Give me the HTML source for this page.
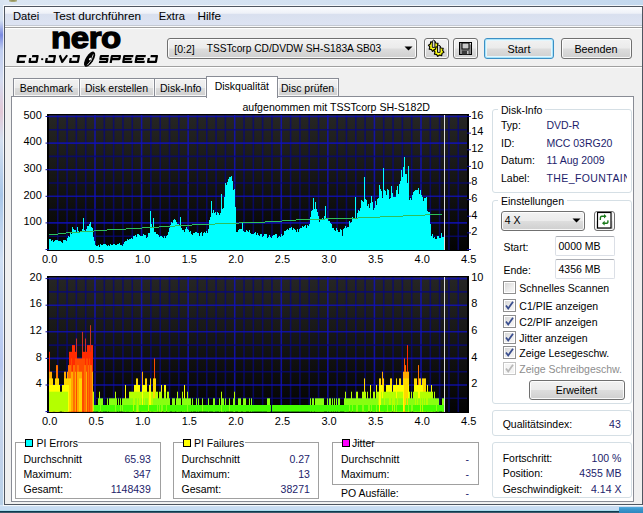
<!DOCTYPE html><html><head><meta charset="utf-8"><style>
html,body{margin:0;padding:0;}
body{width:643px;height:513px;overflow:hidden;position:relative;font-family:"Liberation Sans", sans-serif;background:#c9d8ea;}
.a{position:absolute;}
.t{position:absolute;white-space:pre;font-family:"Liberation Sans", sans-serif;}

</style></head><body>
<div class="a" style="left:0px;top:0px;width:643px;height:6px;background:linear-gradient(90deg,#dbe6f3 0%,#d3e1f1 50%,#c3d8ee 100%);"></div>
<div class="a" style="left:0px;top:0px;width:4px;height:513px;background:linear-gradient(180deg,#d8e4f2 0px,#d4e0f2 20px,#7a8ae0 35px,#c0cef0 50px,#d4dcf0 80px,#e2c8d6 112px,#d4e0f0 140px,#a8c6e8 195px,#d0e0f4 260px,#b4c6f0 365px,#c8d8f0 400px,#c2d2ea 450px,#b8d0e8 505px);"></div>
<div class="a" style="left:0px;top:505px;width:643px;height:8px;background:linear-gradient(180deg,#dce8f6 0px,#c8dcf2 2px,#c8dcf2 5px,#a8dcee 5px,#a8dcee 6px,#0c3c50 6px,#0c3c50 7px,#3c5c6c 7px,#3c5c6c 8px);"></div>
<div class="a" style="left:619px;top:507px;width:24px;height:6px;background:linear-gradient(180deg,#56aadb 0px,#3b98cf 2px,#2d86bd 6px);"></div>
<div class="a" style="left:9px;top:0px;width:8px;height:2px;background:radial-gradient(ellipse at 50% 0%,#8a8a50 0%,#a8a878 60%,rgba(200,210,200,0) 100%);"></div>
<div class="a" style="left:3px;top:5px;width:641px;height:501px;box-sizing:border-box;border:1px solid rgba(255,255,255,0.75);border-right:none;"></div>
<div class="a" style="left:4px;top:6px;width:639px;height:499px;box-sizing:border-box;border:1px solid #4f5661;background:#f0f0f0;"></div>
<div class="a" style="left:5px;top:7px;width:637px;height:18px;background:linear-gradient(180deg,#fbfcfe 0%,#eef1f8 35%,#d9e0ef 40%,#dde3f2 100%);"></div>
<div class="a" style="left:5px;top:25px;width:637px;height:1px;background:#c4c9d3;"></div>
<div class="a" style="left:5px;top:26px;width:637px;height:1px;background:#fafafa;"></div>
<div class="a" style="left:5px;top:27px;width:637px;height:1px;background:#a0a0a0;"></div>
<div class="a" style="left:5px;top:28px;width:637px;height:1px;background:#ffffff;"></div>
<div class="t" style="left:13px;top:11.12px;font-size:11.2px;line-height:11.2px;color:#000;">Datei</div>
<div class="t" style="left:53.3px;top:10.61px;font-size:11.8px;line-height:11.8px;color:#000;">Test durchführen</div>
<div class="t" style="left:158.8px;top:11.12px;font-size:11.2px;line-height:11.2px;color:#000;">Extra</div>
<div class="t" style="left:197.4px;top:10.61px;font-size:11.8px;line-height:11.8px;color:#000;">Hilfe</div>
<div class="a" style="left:5px;top:66px;width:637px;height:1px;background:#a0a0a0;"></div>
<div class="a" style="left:5px;top:67px;width:637px;height:1px;background:#ffffff;"></div>
<div class="t" style="left:51px;top:20.7px;font-size:30px;line-height:34px;font-weight:bold;color:#000;-webkit-text-stroke:1.3px #000;letter-spacing:-0.4px;transform:scaleX(1.1);transform-origin:0 0;">nero</div><svg class="a" style="left:0;top:0" width="170" height="70"><g fill="none" stroke="#000" stroke-width="2.2" stroke-linejoin="round"><g transform="translate(17.70,55) skewX(-10)"><polyline points="8.80,1.10 1.10,1.10 1.10,6.90 8.40,6.90"/></g><g transform="translate(29.70,55) skewX(-10)"><polyline points="2.60,1.10 8.10,1.10 8.10,6.90 1.10,6.90 1.10,2.90"/></g><g transform="translate(46.20,55) skewX(-10)"><polyline points="2.60,1.10 8.90,1.10 8.90,6.90 1.10,6.90 1.10,2.90"/></g><g transform="translate(58.70,55) skewX(-10)"><polyline points="1.10,0.20 4.80,6.90 8.50,0.20"/></g><g transform="translate(70.20,55) skewX(-10)"><polyline points="2.60,1.10 8.90,1.10 8.90,6.90 1.10,6.90 1.10,2.90"/></g><g transform="translate(100.00,55) skewX(-10)"><polyline points="9.00,1.10 1.10,1.10 1.10,4.00 8.10,4.00 8.10,6.90 0.20,6.90"/></g><g transform="translate(111.00,55) skewX(-10)"><polyline points="1.10,8.00 1.10,1.10 9.10,1.10 9.10,4.10 1.60,4.10"/></g><g transform="translate(123.40,55) skewX(-10)"><polyline points="10.10,1.10 1.10,1.10 1.10,6.90 10.10,6.90"/><polyline points="1.10,4.00 8.80,4.00"/></g><g transform="translate(135.80,55) skewX(-10)"><polyline points="10.10,1.10 1.10,1.10 1.10,6.90 10.10,6.90"/><polyline points="1.10,4.00 8.80,4.00"/></g><g transform="translate(148.20,55) skewX(-10)"><polyline points="2.60,1.10 8.90,1.10 8.90,6.90 1.10,6.90 1.10,2.90"/></g></g><rect x="41.2" y="58.3" width="2" height="1.8" fill="#000"/><g transform="translate(89.6,59.2) rotate(-58)"><ellipse cx="0" cy="0" rx="8.6" ry="3.9" fill="#000"/><ellipse cx="0.4" cy="0.2" rx="1.4" ry="0.9" fill="#fff"/><path d="M-6.4 1.2 Q-1 3.0 6.0 0.6" stroke="#fff" stroke-width="0.7" fill="none"/></g></svg>
<div class="a" style="left:167px;top:38px;width:250px;height:21px;box-sizing:border-box;border:1px solid #707070;border-radius:3px;background:linear-gradient(#f2f2f2 0%,#ebebeb 48%,#dddddd 52%,#cfcfcf 100%);box-shadow: inset 0 0 0 1px rgba(255,255,255,0.85);"></div>
<div class="t" style="left:174.3px;top:44.11px;font-size:10.5px;line-height:10.5px;color:#000;">[0:2]</div>
<div class="t" style="left:206.7px;top:44.37px;font-size:10.2px;line-height:10.2px;color:#000;">TSSTcorp CD/DVDW SH-S183A SB03</div>
<svg class="a" style="left:404px;top:46px" width="10" height="6"><path d="M0.5 0.5 L8.5 0.5 L4.5 4.5 Z" fill="#000"/></svg>
<div class="a" style="left:424px;top:38px;width:25px;height:21px;box-sizing:border-box;border:1px solid #707070;border-radius:3px;background:linear-gradient(#f2f2f2 0%,#ebebeb 48%,#dddddd 52%,#cfcfcf 100%);box-shadow: inset 0 0 0 1px rgba(255,255,255,0.85);"></div>
<div class="a" style="left:453px;top:38px;width:25px;height:21px;box-sizing:border-box;border:1px solid #707070;border-radius:3px;background:linear-gradient(#f2f2f2 0%,#ebebeb 48%,#dddddd 52%,#cfcfcf 100%);box-shadow: inset 0 0 0 1px rgba(255,255,255,0.85);"></div>
<svg class="a" style="left:424px;top:38px" width="25" height="21"><polygon points="14.79,9.25 12.83,10.38 12.53,12.62 10.35,12.03 8.55,13.39 7.42,11.43 5.18,11.13 5.77,8.95 4.41,7.15 6.37,6.02 6.67,3.78 8.85,4.37 10.65,3.01 11.78,4.97 14.02,5.27 13.43,7.45" fill="#f4f400" stroke="#000" stroke-width="1.1" stroke-linejoin="round"/><circle cx="9.6" cy="8.2" r="2.6" fill="#ffff40"/><path d="M8.299999999999999 9.399999999999999 V2.999999999999999 Q9.6 1.1999999999999993 10.9 2.999999999999999 V9.399999999999999 Z" fill="#d8d8d8" stroke="#000" stroke-width="0.9"/><polygon points="19.99,14.25 18.03,15.38 17.73,17.62 15.55,17.03 13.75,18.39 12.62,16.43 10.38,16.13 10.97,13.95 9.61,12.15 11.57,11.02 11.87,8.78 14.05,9.37 15.85,8.01 16.98,9.97 19.22,10.27 18.63,12.45" fill="#f4f400" stroke="#000" stroke-width="1.1" stroke-linejoin="round"/><circle cx="14.8" cy="13.2" r="2.6" fill="#ffff40"/><path d="M13.5 14.399999999999999 V7.999999999999999 Q14.8 6.199999999999999 16.1 7.999999999999999 V14.399999999999999 Z" fill="#d8d8d8" stroke="#000" stroke-width="0.9"/></svg><svg class="a" style="left:459px;top:42px" width="13" height="13"><rect x="0.5" y="0.5" width="12" height="12" fill="#8a8a8a" stroke="#000"/><rect x="3" y="1" width="7" height="6" fill="#c8c8c8" stroke="#000" stroke-width="1"/><rect x="3" y="8.5" width="7.5" height="4" fill="#3a3a3a"/><rect x="8" y="9" width="1.6" height="3" fill="#c0c0c0"/><rect x="10.8" y="1.2" width="1.2" height="1.2" fill="#fff"/></svg>
<div class="a" style="left:484px;top:38px;width:70px;height:21px;box-sizing:border-box;border:1px solid #3c8fc4;border-radius:3px;background:linear-gradient(#f2f2f2 0%,#ebebeb 48%,#dddddd 52%,#cfcfcf 100%);box-shadow: inset 0 0 0 1px #a9e4fa, inset 0 0 0 2px #e4f6fd;"></div>
<div class="t" style="left:319px;width:400px;text-align:center;top:43.86px;font-size:10.8px;line-height:10.8px;color:#000;">Start</div>
<div class="a" style="left:561px;top:38px;width:71px;height:21px;box-sizing:border-box;border:1px solid #707070;border-radius:3px;background:linear-gradient(#f2f2f2 0%,#ebebeb 48%,#dddddd 52%,#cfcfcf 100%);box-shadow: inset 0 0 0 1px rgba(255,255,255,0.85);"></div>
<div class="t" style="left:396px;width:400px;text-align:center;top:43.86px;font-size:10.8px;line-height:10.8px;color:#000;">Beenden</div>
<div class="a" style="left:13px;top:78px;width:67px;height:19px;box-sizing:border-box;border:1px solid #898c95;background:linear-gradient(#f2f2f2 0%,#ebebeb 50%,#dddddd 51%,#cfcfcf 100%);box-shadow: inset 0 0 0 1px rgba(255,255,255,0.8);"></div>
<div class="t" style="left:19.7px;top:82.61px;font-size:10.5px;line-height:10.5px;color:#000;">Benchmark</div>
<div class="a" style="left:79px;top:78px;width:76px;height:19px;box-sizing:border-box;border:1px solid #898c95;background:linear-gradient(#f2f2f2 0%,#ebebeb 50%,#dddddd 51%,#cfcfcf 100%);box-shadow: inset 0 0 0 1px rgba(255,255,255,0.8);"></div>
<div class="t" style="left:85px;top:82.61px;font-size:10.5px;line-height:10.5px;color:#000;">Disk erstellen</div>
<div class="a" style="left:154px;top:78px;width:53px;height:19px;box-sizing:border-box;border:1px solid #898c95;background:linear-gradient(#f2f2f2 0%,#ebebeb 50%,#dddddd 51%,#cfcfcf 100%);box-shadow: inset 0 0 0 1px rgba(255,255,255,0.8);"></div>
<div class="t" style="left:160px;top:82.61px;font-size:10.5px;line-height:10.5px;color:#000;">Disk-Info</div>
<div class="a" style="left:277px;top:78px;width:62px;height:19px;box-sizing:border-box;border:1px solid #898c95;background:linear-gradient(#f2f2f2 0%,#ebebeb 50%,#dddddd 51%,#cfcfcf 100%);box-shadow: inset 0 0 0 1px rgba(255,255,255,0.8);"></div>
<div class="t" style="left:281px;top:82.61px;font-size:10.5px;line-height:10.5px;color:#000;">Disc prüfen</div>
<div class="a" style="left:11px;top:96px;width:623px;height:406px;box-sizing:border-box;border:1px solid #898c95;background:#fff;"></div>
<div class="a" style="left:206px;top:76px;width:72px;height:22px;box-sizing:border-box;border:1px solid #898c95;border-bottom:none;background:#fff;"></div>
<div class="t" style="left:214.7px;top:80.71px;font-size:10.5px;line-height:10.5px;color:#000;">Diskqualität</div>
<div class="t" style="left:242.4px;top:102.43px;font-size:10.6px;line-height:10.6px;color:#000;">aufgenommen mit TSSTcorp SH-S182D</div>
<svg class="a" style="left:0;top:0" width="643" height="513">
<defs><linearGradient id="bg" x1="0" y1="0" x2="0" y2="1"><stop offset="0" stop-color="#262624"/><stop offset="1" stop-color="#030303"/></linearGradient></defs>
<rect x="47" y="114" width="422" height="137" fill="#000"/>
<rect x="49" y="115" width="418" height="135" fill="url(#bg)"/>
<rect x="47" y="276" width="422" height="137" fill="#000"/>
<rect x="49" y="277" width="418" height="135" fill="url(#bg)"/>
<line x1="57.74" y1="115" x2="57.74" y2="250" stroke="#08087a" stroke-opacity="0.75" stroke-width="1.6"/>
<line x1="67.06" y1="115" x2="67.06" y2="250" stroke="#08087a" stroke-opacity="0.75" stroke-width="1.6"/>
<line x1="76.37" y1="115" x2="76.37" y2="250" stroke="#08087a" stroke-opacity="0.75" stroke-width="1.6"/>
<line x1="85.69" y1="115" x2="85.69" y2="250" stroke="#08087a" stroke-opacity="0.75" stroke-width="1.6"/>
<line x1="95.00" y1="115" x2="95.00" y2="250" stroke="#1010c0" stroke-opacity="0.8" stroke-width="1.6"/>
<line x1="104.31" y1="115" x2="104.31" y2="250" stroke="#08087a" stroke-opacity="0.75" stroke-width="1.6"/>
<line x1="113.63" y1="115" x2="113.63" y2="250" stroke="#08087a" stroke-opacity="0.75" stroke-width="1.6"/>
<line x1="122.94" y1="115" x2="122.94" y2="250" stroke="#08087a" stroke-opacity="0.75" stroke-width="1.6"/>
<line x1="132.26" y1="115" x2="132.26" y2="250" stroke="#08087a" stroke-opacity="0.75" stroke-width="1.6"/>
<line x1="141.57" y1="115" x2="141.57" y2="250" stroke="#1010c0" stroke-opacity="0.8" stroke-width="1.6"/>
<line x1="150.88" y1="115" x2="150.88" y2="250" stroke="#08087a" stroke-opacity="0.75" stroke-width="1.6"/>
<line x1="160.20" y1="115" x2="160.20" y2="250" stroke="#08087a" stroke-opacity="0.75" stroke-width="1.6"/>
<line x1="169.51" y1="115" x2="169.51" y2="250" stroke="#08087a" stroke-opacity="0.75" stroke-width="1.6"/>
<line x1="178.83" y1="115" x2="178.83" y2="250" stroke="#08087a" stroke-opacity="0.75" stroke-width="1.6"/>
<line x1="188.14" y1="115" x2="188.14" y2="250" stroke="#1010c0" stroke-opacity="0.8" stroke-width="1.6"/>
<line x1="197.45" y1="115" x2="197.45" y2="250" stroke="#08087a" stroke-opacity="0.75" stroke-width="1.6"/>
<line x1="206.77" y1="115" x2="206.77" y2="250" stroke="#08087a" stroke-opacity="0.75" stroke-width="1.6"/>
<line x1="216.08" y1="115" x2="216.08" y2="250" stroke="#08087a" stroke-opacity="0.75" stroke-width="1.6"/>
<line x1="225.40" y1="115" x2="225.40" y2="250" stroke="#08087a" stroke-opacity="0.75" stroke-width="1.6"/>
<line x1="234.71" y1="115" x2="234.71" y2="250" stroke="#1010c0" stroke-opacity="0.8" stroke-width="1.6"/>
<line x1="244.02" y1="115" x2="244.02" y2="250" stroke="#08087a" stroke-opacity="0.75" stroke-width="1.6"/>
<line x1="253.34" y1="115" x2="253.34" y2="250" stroke="#08087a" stroke-opacity="0.75" stroke-width="1.6"/>
<line x1="262.65" y1="115" x2="262.65" y2="250" stroke="#08087a" stroke-opacity="0.75" stroke-width="1.6"/>
<line x1="271.97" y1="115" x2="271.97" y2="250" stroke="#08087a" stroke-opacity="0.75" stroke-width="1.6"/>
<line x1="281.28" y1="115" x2="281.28" y2="250" stroke="#1010c0" stroke-opacity="0.8" stroke-width="1.6"/>
<line x1="290.59" y1="115" x2="290.59" y2="250" stroke="#08087a" stroke-opacity="0.75" stroke-width="1.6"/>
<line x1="299.91" y1="115" x2="299.91" y2="250" stroke="#08087a" stroke-opacity="0.75" stroke-width="1.6"/>
<line x1="309.22" y1="115" x2="309.22" y2="250" stroke="#08087a" stroke-opacity="0.75" stroke-width="1.6"/>
<line x1="318.54" y1="115" x2="318.54" y2="250" stroke="#08087a" stroke-opacity="0.75" stroke-width="1.6"/>
<line x1="327.85" y1="115" x2="327.85" y2="250" stroke="#1010c0" stroke-opacity="0.8" stroke-width="1.6"/>
<line x1="337.16" y1="115" x2="337.16" y2="250" stroke="#08087a" stroke-opacity="0.75" stroke-width="1.6"/>
<line x1="346.48" y1="115" x2="346.48" y2="250" stroke="#08087a" stroke-opacity="0.75" stroke-width="1.6"/>
<line x1="355.79" y1="115" x2="355.79" y2="250" stroke="#08087a" stroke-opacity="0.75" stroke-width="1.6"/>
<line x1="365.11" y1="115" x2="365.11" y2="250" stroke="#08087a" stroke-opacity="0.75" stroke-width="1.6"/>
<line x1="374.42" y1="115" x2="374.42" y2="250" stroke="#1010c0" stroke-opacity="0.8" stroke-width="1.6"/>
<line x1="383.73" y1="115" x2="383.73" y2="250" stroke="#08087a" stroke-opacity="0.75" stroke-width="1.6"/>
<line x1="393.05" y1="115" x2="393.05" y2="250" stroke="#08087a" stroke-opacity="0.75" stroke-width="1.6"/>
<line x1="402.36" y1="115" x2="402.36" y2="250" stroke="#08087a" stroke-opacity="0.75" stroke-width="1.6"/>
<line x1="411.68" y1="115" x2="411.68" y2="250" stroke="#08087a" stroke-opacity="0.75" stroke-width="1.6"/>
<line x1="420.99" y1="115" x2="420.99" y2="250" stroke="#1010c0" stroke-opacity="0.8" stroke-width="1.6"/>
<line x1="430.30" y1="115" x2="430.30" y2="250" stroke="#08087a" stroke-opacity="0.75" stroke-width="1.6"/>
<line x1="439.62" y1="115" x2="439.62" y2="250" stroke="#08087a" stroke-opacity="0.75" stroke-width="1.6"/>
<line x1="448.93" y1="115" x2="448.93" y2="250" stroke="#08087a" stroke-opacity="0.75" stroke-width="1.6"/>
<line x1="458.25" y1="115" x2="458.25" y2="250" stroke="#08087a" stroke-opacity="0.75" stroke-width="1.6"/>
<line x1="49" y1="236.20" x2="467" y2="236.20" stroke="#08087a" stroke-opacity="0.75" stroke-width="1.6"/>
<line x1="49" y1="209.60" x2="467" y2="209.60" stroke="#08087a" stroke-opacity="0.75" stroke-width="1.6"/>
<line x1="49" y1="183.00" x2="467" y2="183.00" stroke="#08087a" stroke-opacity="0.75" stroke-width="1.6"/>
<line x1="49" y1="156.40" x2="467" y2="156.40" stroke="#08087a" stroke-opacity="0.75" stroke-width="1.6"/>
<line x1="49" y1="129.80" x2="467" y2="129.80" stroke="#08087a" stroke-opacity="0.75" stroke-width="1.6"/>
<line x1="49" y1="222.90" x2="467" y2="222.90" stroke="#1010c0" stroke-opacity="0.8" stroke-width="1.6"/>
<line x1="49" y1="196.30" x2="467" y2="196.30" stroke="#1010c0" stroke-opacity="0.8" stroke-width="1.6"/>
<line x1="49" y1="169.70" x2="467" y2="169.70" stroke="#1010c0" stroke-opacity="0.8" stroke-width="1.6"/>
<line x1="49" y1="143.10" x2="467" y2="143.10" stroke="#1010c0" stroke-opacity="0.8" stroke-width="1.6"/>
<line x1="49" y1="116.50" x2="467" y2="116.50" stroke="#1010c0" stroke-opacity="0.8" stroke-width="1.6"/>
<line x1="57.74" y1="277" x2="57.74" y2="412" stroke="#08087a" stroke-opacity="0.75" stroke-width="1.6"/>
<line x1="67.06" y1="277" x2="67.06" y2="412" stroke="#08087a" stroke-opacity="0.75" stroke-width="1.6"/>
<line x1="76.37" y1="277" x2="76.37" y2="412" stroke="#08087a" stroke-opacity="0.75" stroke-width="1.6"/>
<line x1="85.69" y1="277" x2="85.69" y2="412" stroke="#08087a" stroke-opacity="0.75" stroke-width="1.6"/>
<line x1="95.00" y1="277" x2="95.00" y2="412" stroke="#1010c0" stroke-opacity="0.8" stroke-width="1.6"/>
<line x1="104.31" y1="277" x2="104.31" y2="412" stroke="#08087a" stroke-opacity="0.75" stroke-width="1.6"/>
<line x1="113.63" y1="277" x2="113.63" y2="412" stroke="#08087a" stroke-opacity="0.75" stroke-width="1.6"/>
<line x1="122.94" y1="277" x2="122.94" y2="412" stroke="#08087a" stroke-opacity="0.75" stroke-width="1.6"/>
<line x1="132.26" y1="277" x2="132.26" y2="412" stroke="#08087a" stroke-opacity="0.75" stroke-width="1.6"/>
<line x1="141.57" y1="277" x2="141.57" y2="412" stroke="#1010c0" stroke-opacity="0.8" stroke-width="1.6"/>
<line x1="150.88" y1="277" x2="150.88" y2="412" stroke="#08087a" stroke-opacity="0.75" stroke-width="1.6"/>
<line x1="160.20" y1="277" x2="160.20" y2="412" stroke="#08087a" stroke-opacity="0.75" stroke-width="1.6"/>
<line x1="169.51" y1="277" x2="169.51" y2="412" stroke="#08087a" stroke-opacity="0.75" stroke-width="1.6"/>
<line x1="178.83" y1="277" x2="178.83" y2="412" stroke="#08087a" stroke-opacity="0.75" stroke-width="1.6"/>
<line x1="188.14" y1="277" x2="188.14" y2="412" stroke="#1010c0" stroke-opacity="0.8" stroke-width="1.6"/>
<line x1="197.45" y1="277" x2="197.45" y2="412" stroke="#08087a" stroke-opacity="0.75" stroke-width="1.6"/>
<line x1="206.77" y1="277" x2="206.77" y2="412" stroke="#08087a" stroke-opacity="0.75" stroke-width="1.6"/>
<line x1="216.08" y1="277" x2="216.08" y2="412" stroke="#08087a" stroke-opacity="0.75" stroke-width="1.6"/>
<line x1="225.40" y1="277" x2="225.40" y2="412" stroke="#08087a" stroke-opacity="0.75" stroke-width="1.6"/>
<line x1="234.71" y1="277" x2="234.71" y2="412" stroke="#1010c0" stroke-opacity="0.8" stroke-width="1.6"/>
<line x1="244.02" y1="277" x2="244.02" y2="412" stroke="#08087a" stroke-opacity="0.75" stroke-width="1.6"/>
<line x1="253.34" y1="277" x2="253.34" y2="412" stroke="#08087a" stroke-opacity="0.75" stroke-width="1.6"/>
<line x1="262.65" y1="277" x2="262.65" y2="412" stroke="#08087a" stroke-opacity="0.75" stroke-width="1.6"/>
<line x1="271.97" y1="277" x2="271.97" y2="412" stroke="#08087a" stroke-opacity="0.75" stroke-width="1.6"/>
<line x1="281.28" y1="277" x2="281.28" y2="412" stroke="#1010c0" stroke-opacity="0.8" stroke-width="1.6"/>
<line x1="290.59" y1="277" x2="290.59" y2="412" stroke="#08087a" stroke-opacity="0.75" stroke-width="1.6"/>
<line x1="299.91" y1="277" x2="299.91" y2="412" stroke="#08087a" stroke-opacity="0.75" stroke-width="1.6"/>
<line x1="309.22" y1="277" x2="309.22" y2="412" stroke="#08087a" stroke-opacity="0.75" stroke-width="1.6"/>
<line x1="318.54" y1="277" x2="318.54" y2="412" stroke="#08087a" stroke-opacity="0.75" stroke-width="1.6"/>
<line x1="327.85" y1="277" x2="327.85" y2="412" stroke="#1010c0" stroke-opacity="0.8" stroke-width="1.6"/>
<line x1="337.16" y1="277" x2="337.16" y2="412" stroke="#08087a" stroke-opacity="0.75" stroke-width="1.6"/>
<line x1="346.48" y1="277" x2="346.48" y2="412" stroke="#08087a" stroke-opacity="0.75" stroke-width="1.6"/>
<line x1="355.79" y1="277" x2="355.79" y2="412" stroke="#08087a" stroke-opacity="0.75" stroke-width="1.6"/>
<line x1="365.11" y1="277" x2="365.11" y2="412" stroke="#08087a" stroke-opacity="0.75" stroke-width="1.6"/>
<line x1="374.42" y1="277" x2="374.42" y2="412" stroke="#1010c0" stroke-opacity="0.8" stroke-width="1.6"/>
<line x1="383.73" y1="277" x2="383.73" y2="412" stroke="#08087a" stroke-opacity="0.75" stroke-width="1.6"/>
<line x1="393.05" y1="277" x2="393.05" y2="412" stroke="#08087a" stroke-opacity="0.75" stroke-width="1.6"/>
<line x1="402.36" y1="277" x2="402.36" y2="412" stroke="#08087a" stroke-opacity="0.75" stroke-width="1.6"/>
<line x1="411.68" y1="277" x2="411.68" y2="412" stroke="#08087a" stroke-opacity="0.75" stroke-width="1.6"/>
<line x1="420.99" y1="277" x2="420.99" y2="412" stroke="#1010c0" stroke-opacity="0.8" stroke-width="1.6"/>
<line x1="430.30" y1="277" x2="430.30" y2="412" stroke="#08087a" stroke-opacity="0.75" stroke-width="1.6"/>
<line x1="439.62" y1="277" x2="439.62" y2="412" stroke="#08087a" stroke-opacity="0.75" stroke-width="1.6"/>
<line x1="448.93" y1="277" x2="448.93" y2="412" stroke="#08087a" stroke-opacity="0.75" stroke-width="1.6"/>
<line x1="458.25" y1="277" x2="458.25" y2="412" stroke="#08087a" stroke-opacity="0.75" stroke-width="1.6"/>
<line x1="49" y1="398.30" x2="467" y2="398.30" stroke="#08087a" stroke-opacity="0.75" stroke-width="1.6"/>
<line x1="49" y1="371.70" x2="467" y2="371.70" stroke="#08087a" stroke-opacity="0.75" stroke-width="1.6"/>
<line x1="49" y1="345.10" x2="467" y2="345.10" stroke="#08087a" stroke-opacity="0.75" stroke-width="1.6"/>
<line x1="49" y1="318.50" x2="467" y2="318.50" stroke="#08087a" stroke-opacity="0.75" stroke-width="1.6"/>
<line x1="49" y1="291.90" x2="467" y2="291.90" stroke="#08087a" stroke-opacity="0.75" stroke-width="1.6"/>
<line x1="49" y1="385.00" x2="467" y2="385.00" stroke="#1010c0" stroke-opacity="0.8" stroke-width="1.6"/>
<line x1="49" y1="358.40" x2="467" y2="358.40" stroke="#1010c0" stroke-opacity="0.8" stroke-width="1.6"/>
<line x1="49" y1="331.80" x2="467" y2="331.80" stroke="#1010c0" stroke-opacity="0.8" stroke-width="1.6"/>
<line x1="49" y1="305.20" x2="467" y2="305.20" stroke="#1010c0" stroke-opacity="0.8" stroke-width="1.6"/>
<line x1="49" y1="278.60" x2="467" y2="278.60" stroke="#1010c0" stroke-opacity="0.8" stroke-width="1.6"/>
<path d="M49 238.5V249.5H50V238.5ZM50 238.8V249.5H51V238.8ZM51 240.9V249.5H52V240.9ZM52 240.0V249.5H53V240.0ZM53 241.7V249.5H54V241.7ZM54 241.0V249.5H55V241.0ZM55 239.7V249.5H56V239.7ZM56 240.4V249.5H57V240.4ZM57 239.9V249.5H58V239.9ZM58 241.3V249.5H59V241.3ZM59 241.0V249.5H60V241.0ZM60 241.4V249.5H61V241.4ZM61 242.2V249.5H62V242.2ZM62 242.9V249.5H63V242.9ZM63 240.2V249.5H64V240.2ZM64 239.7V249.5H65V239.7ZM65 240.2V249.5H66V240.2ZM66 240.7V249.5H67V240.7ZM67 237.9V249.5H68V237.9ZM68 235.9V249.5H69V235.9ZM69 237.4V249.5H70V237.4ZM70 232.4V249.5H71V232.4ZM71 234.0V249.5H72V234.0ZM72 229.3V249.5H73V229.3ZM73 229.2V249.5H74V229.2ZM74 229.8V249.5H75V229.8ZM75 230.3V249.5H76V230.3ZM76 231.8V249.5H77V231.8ZM77 227.7V249.5H78V227.7ZM78 230.8V249.5H79V230.8ZM79 232.3V249.5H80V232.3ZM80 231.4V249.5H81V231.4ZM81 231.5V249.5H82V231.5ZM82 229.0V249.5H83V229.0ZM83 228.6V249.5H84V228.6ZM84 229.6V249.5H85V229.6ZM85 232.3V249.5H86V232.3ZM86 229.2V249.5H87V229.2ZM87 226.0V249.5H88V226.0ZM88 225.5V249.5H89V225.5ZM89 224.0V249.5H90V224.0ZM90 222.6V249.5H91V222.6ZM91 227.1V249.5H92V227.1ZM92 228.2V249.5H93V228.2ZM93 236.9V249.5H94V236.9ZM94 241.4V249.5H95V241.4ZM95 244.7V249.5H96V244.7ZM96 246.4V249.5H97V246.4ZM97 246.2V249.5H98V246.2ZM98 245.2V249.5H99V245.2ZM99 246.7V249.5H100V246.7ZM100 244.3V249.5H101V244.3ZM101 244.5V249.5H102V244.5ZM102 245.1V249.5H103V245.1ZM103 243.6V249.5H104V243.6ZM104 244.4V249.5H105V244.4ZM105 243.7V249.5H106V243.7ZM106 245.1V249.5H107V245.1ZM107 245.5V249.5H108V245.5ZM108 245.1V249.5H109V245.1ZM109 246.1V249.5H110V246.1ZM110 244.3V249.5H111V244.3ZM111 245.1V249.5H112V245.1ZM112 244.5V249.5H113V244.5ZM113 244.2V249.5H114V244.2ZM114 243.6V249.5H115V243.6ZM115 244.6V249.5H116V244.6ZM116 244.9V249.5H117V244.9ZM117 243.5V249.5H118V243.5ZM118 244.2V249.5H119V244.2ZM119 243.0V249.5H120V243.0ZM120 244.6V249.5H121V244.6ZM121 244.5V249.5H122V244.5ZM122 245.8V249.5H123V245.8ZM123 244.3V249.5H124V244.3ZM124 241.6V249.5H125V241.6ZM125 240.8V249.5H126V240.8ZM126 241.4V249.5H127V241.4ZM127 239.4V249.5H128V239.4ZM128 240.1V249.5H129V240.1ZM129 239.0V249.5H130V239.0ZM130 238.6V249.5H131V238.6ZM131 237.9V249.5H132V237.9ZM132 239.3V249.5H133V239.3ZM133 236.3V249.5H134V236.3ZM134 235.7V249.5H135V235.7ZM135 235.3V249.5H136V235.3ZM136 236.7V249.5H137V236.7ZM137 233.5V249.5H138V233.5ZM138 234.4V249.5H139V234.4ZM139 234.7V249.5H140V234.7ZM140 236.2V249.5H141V236.2ZM141 235.7V249.5H142V235.7ZM142 236.0V249.5H143V236.0ZM143 233.8V249.5H144V233.8ZM144 234.7V249.5H145V234.7ZM145 234.9V249.5H146V234.9ZM146 237.6V249.5H147V237.6ZM147 237.4V249.5H148V237.4ZM148 233.4V249.5H149V233.4ZM149 232.7V249.5H150V232.7ZM150 228.6V249.5H151V228.6ZM151 224.2V249.5H152V224.2ZM152 227.1V249.5H153V227.1ZM153 232.0V249.5H154V232.0ZM154 231.8V249.5H155V231.8ZM155 232.4V249.5H156V232.4ZM156 233.9V249.5H157V233.9ZM157 234.0V249.5H158V234.0ZM158 235.0V249.5H159V235.0ZM159 237.2V249.5H160V237.2ZM160 236.4V249.5H161V236.4ZM161 236.3V249.5H162V236.3ZM162 237.3V249.5H163V237.3ZM163 238.1V249.5H164V238.1ZM164 235.7V249.5H165V235.7ZM165 237.6V249.5H166V237.6ZM166 235.8V249.5H167V235.8ZM167 235.2V249.5H168V235.2ZM168 232.4V249.5H169V232.4ZM169 227.6V249.5H170V227.6ZM170 225.0V249.5H171V225.0ZM171 221.5V249.5H172V221.5ZM172 223.4V249.5H173V223.4ZM173 219.9V249.5H174V219.9ZM174 219.1V249.5H175V219.1ZM175 220.2V249.5H176V220.2ZM176 221.7V249.5H177V221.7ZM177 224.0V249.5H178V224.0ZM178 224.3V249.5H179V224.3ZM179 225.4V249.5H180V225.4ZM180 226.9V249.5H181V226.9ZM181 228.0V249.5H182V228.0ZM182 230.0V249.5H183V230.0ZM183 229.5V249.5H184V229.5ZM184 231.9V249.5H185V231.9ZM185 229.0V249.5H186V229.0ZM186 227.2V249.5H187V227.2ZM187 228.7V249.5H188V228.7ZM188 230.3V249.5H189V230.3ZM189 231.6V249.5H190V231.6ZM190 231.2V249.5H191V231.2ZM191 234.4V249.5H192V234.4ZM192 235.4V249.5H193V235.4ZM193 232.8V249.5H194V232.8ZM194 233.0V249.5H195V233.0ZM195 232.0V249.5H196V232.0ZM196 232.2V249.5H197V232.2ZM197 233.2V249.5H198V233.2ZM198 233.2V249.5H199V233.2ZM199 235.5V249.5H200V235.5ZM200 232.6V249.5H201V232.6ZM201 232.1V249.5H202V232.1ZM202 235.7V249.5H203V235.7ZM203 233.3V249.5H204V233.3ZM204 231.7V249.5H205V231.7ZM205 233.0V249.5H206V233.0ZM206 231.1V249.5H207V231.1ZM207 232.5V249.5H208V232.5ZM208 229.3V249.5H209V229.3ZM209 220.1V249.5H210V220.1ZM210 217.3V249.5H211V217.3ZM211 213.7V249.5H212V213.7ZM212 213.4V249.5H213V213.4ZM213 209.8V249.5H214V209.8ZM214 212.8V249.5H215V212.8ZM215 211.6V249.5H216V211.6ZM216 214.8V249.5H217V214.8ZM217 212.2V249.5H218V212.2ZM218 212.6V249.5H219V212.6ZM219 214.6V249.5H220V214.6ZM220 212.8V249.5H221V212.8ZM221 210.4V249.5H222V210.4ZM222 209.3V249.5H223V209.3ZM223 207.8V249.5H224V207.8ZM224 196.6V249.5H225V196.6ZM225 183.2V249.5H226V183.2ZM226 185.2V249.5H227V185.2ZM227 182.4V249.5H228V182.4ZM228 178.6V249.5H229V178.6ZM229 176.9V249.5H230V176.9ZM230 177.0V249.5H231V177.0ZM231 176.0V249.5H232V176.0ZM232 181.0V249.5H233V181.0ZM233 189.7V249.5H234V189.7ZM234 188.9V249.5H235V188.9ZM235 207.4V249.5H236V207.4ZM236 231.9V249.5H237V231.9ZM237 232.3V249.5H238V232.3ZM238 229.6V249.5H239V229.6ZM239 229.4V249.5H240V229.4ZM240 229.2V249.5H241V229.2ZM241 229.0V249.5H242V229.0ZM242 228.8V249.5H243V228.8ZM243 230.5V249.5H244V230.5ZM244 232.0V249.5H245V232.0ZM245 231.9V249.5H246V231.9ZM246 230.1V249.5H247V230.1ZM247 231.2V249.5H248V231.2ZM248 232.4V249.5H249V232.4ZM249 229.8V249.5H250V229.8ZM250 232.5V249.5H251V232.5ZM251 234.4V249.5H252V234.4ZM252 233.9V249.5H253V233.9ZM253 234.0V249.5H254V234.0ZM254 232.9V249.5H255V232.9ZM255 232.1V249.5H256V232.1ZM256 234.8V249.5H257V234.8ZM257 232.9V249.5H258V232.9ZM258 235.1V249.5H259V235.1ZM259 236.3V249.5H260V236.3ZM260 233.6V249.5H261V233.6ZM261 233.8V249.5H262V233.8ZM262 236.7V249.5H263V236.7ZM263 235.7V249.5H264V235.7ZM264 233.8V249.5H265V233.8ZM265 234.0V249.5H266V234.0ZM266 234.3V249.5H267V234.3ZM267 237.5V249.5H268V237.5ZM268 237.2V249.5H269V237.2ZM269 234.5V249.5H270V234.5ZM270 237.0V249.5H271V237.0ZM271 237.7V249.5H272V237.7ZM272 235.9V249.5H273V235.9ZM273 234.6V249.5H274V234.6ZM274 235.2V249.5H275V235.2ZM275 234.0V249.5H276V234.0ZM276 234.2V249.5H277V234.2ZM277 238.1V249.5H278V238.1ZM278 236.9V249.5H279V236.9ZM279 236.0V249.5H280V236.0ZM280 237.3V249.5H281V237.3ZM281 234.2V249.5H282V234.2ZM282 235.6V249.5H283V235.6ZM283 234.6V249.5H284V234.6ZM284 231.2V249.5H285V231.2ZM285 230.5V249.5H286V230.5ZM286 230.0V249.5H287V230.0ZM287 229.0V249.5H288V229.0ZM288 230.0V249.5H289V230.0ZM289 228.0V249.5H290V228.0ZM290 228.2V249.5H291V228.2ZM291 226.6V249.5H292V226.6ZM292 230.4V249.5H293V230.4ZM293 227.7V249.5H294V227.7ZM294 228.6V249.5H295V228.6ZM295 229.8V249.5H296V229.8ZM296 232.1V249.5H297V232.1ZM297 229.1V249.5H298V229.1ZM298 231.5V249.5H299V231.5ZM299 228.6V249.5H300V228.6ZM300 228.2V249.5H301V228.2ZM301 227.8V249.5H302V227.8ZM302 225.7V249.5H303V225.7ZM303 226.9V249.5H304V226.9ZM304 225.6V249.5H305V225.6ZM305 224.9V249.5H306V224.9ZM306 228.2V249.5H307V228.2ZM307 224.6V249.5H308V224.6ZM308 225.5V249.5H309V225.5ZM309 223.5V249.5H310V223.5ZM310 216.6V249.5H311V216.6ZM311 210.7V249.5H312V210.7ZM312 210.1V249.5H313V210.1ZM313 208.5V249.5H314V208.5ZM314 208.9V249.5H315V208.9ZM315 201.5V249.5H316V201.5ZM316 208.9V249.5H317V208.9ZM317 211.7V249.5H318V211.7ZM318 215.5V249.5H319V215.5ZM319 221.8V249.5H320V221.8ZM320 220.3V249.5H321V220.3ZM321 218.7V249.5H322V218.7ZM322 218.4V249.5H323V218.4ZM323 218.5V249.5H324V218.5ZM324 215.6V249.5H325V215.6ZM325 217.7V249.5H326V217.7ZM326 217.9V249.5H327V217.9ZM327 218.9V249.5H328V218.9ZM328 221.4V249.5H329V221.4ZM329 221.1V249.5H330V221.1ZM330 222.8V249.5H331V222.8ZM331 223.8V249.5H332V223.8ZM332 228.2V249.5H333V228.2ZM333 227.8V249.5H334V227.8ZM334 230.1V249.5H335V230.1ZM335 231.0V249.5H336V231.0ZM336 227.7V249.5H337V227.7ZM337 229.5V249.5H338V229.5ZM338 232.3V249.5H339V232.3ZM339 232.0V249.5H340V232.0ZM340 229.2V249.5H341V229.2ZM341 229.6V249.5H342V229.6ZM342 235.5V249.5H343V235.5ZM343 228.8V249.5H344V228.8ZM344 228.0V249.5H345V228.0ZM345 226.3V249.5H346V226.3ZM346 227.7V249.5H347V227.7ZM347 227.2V249.5H348V227.2ZM348 226.9V249.5H349V226.9ZM349 221.3V249.5H350V221.3ZM350 223.2V249.5H351V223.2ZM351 221.6V249.5H352V221.6ZM352 216.5V249.5H353V216.5ZM353 219.2V249.5H354V219.2ZM354 218.0V249.5H355V218.0ZM355 211.4V249.5H356V211.4ZM356 218.1V249.5H357V218.1ZM357 212.9V249.5H358V212.9ZM358 209.6V249.5H359V209.6ZM359 211.1V249.5H360V211.1ZM360 207.5V249.5H361V207.5ZM361 199.8V249.5H362V199.8ZM362 201.1V249.5H363V201.1ZM363 201.6V249.5H364V201.6ZM364 199.8V249.5H365V199.8ZM365 198.6V249.5H366V198.6ZM366 200.2V249.5H367V200.2ZM367 206.2V249.5H368V206.2ZM368 203.5V249.5H369V203.5ZM369 208.4V249.5H370V208.4ZM370 203.2V249.5H371V203.2ZM371 196.4V249.5H372V196.4ZM372 201.6V249.5H373V201.6ZM373 209.5V249.5H374V209.5ZM374 208.0V249.5H375V208.0ZM375 200.6V249.5H376V200.6ZM376 205.0V249.5H377V205.0ZM377 198.7V249.5H378V198.7ZM378 197.7V249.5H379V197.7ZM379 184.8V249.5H380V184.8ZM380 189.3V249.5H381V189.3ZM381 191.4V249.5H382V191.4ZM382 197.9V249.5H383V197.9ZM383 191.5V249.5H384V191.5ZM384 189.6V249.5H385V189.6ZM385 190.9V249.5H386V190.9ZM386 194.7V249.5H387V194.7ZM387 188.9V249.5H388V188.9ZM388 189.9V249.5H389V189.9ZM389 198.5V249.5H390V198.5ZM390 198.4V249.5H391V198.4ZM391 186.0V249.5H392V186.0ZM392 193.0V249.5H393V193.0ZM393 196.5V249.5H394V196.5ZM394 196.7V249.5H395V196.7ZM395 196.5V249.5H396V196.5ZM396 190.0V249.5H397V190.0ZM397 186.3V249.5H398V186.3ZM398 193.9V249.5H399V193.9ZM399 184.0V249.5H400V184.0ZM400 181.1V249.5H401V181.1ZM401 169.6V249.5H402V169.6ZM402 177.2V249.5H403V177.2ZM403 167.2V249.5H404V167.2ZM404 178.8V249.5H405V178.8ZM405 173.7V249.5H406V173.7ZM406 173.7V249.5H407V173.7ZM407 183.4V249.5H408V183.4ZM408 197.8V249.5H409V197.8ZM409 200.0V249.5H410V200.0ZM410 197.8V249.5H411V197.8ZM411 199.5V249.5H412V199.5ZM412 195.1V249.5H413V195.1ZM413 191.8V249.5H414V191.8ZM414 190.5V249.5H415V190.5ZM415 189.5V249.5H416V189.5ZM416 189.6V249.5H417V189.6ZM417 189.5V249.5H418V189.5ZM418 188.4V249.5H419V188.4ZM419 193.6V249.5H420V193.6ZM420 189.8V249.5H421V189.8ZM421 194.6V249.5H422V194.6ZM422 196.7V249.5H423V196.7ZM423 200.9V249.5H424V200.9ZM424 198.1V249.5H425V198.1ZM425 198.3V249.5H426V198.3ZM426 196.5V249.5H427V196.5ZM427 211.3V249.5H428V211.3ZM428 212.2V249.5H429V212.2ZM429 212.4V249.5H430V212.4ZM430 224.3V249.5H431V224.3ZM431 236.3V249.5H432V236.3ZM432 233.8V249.5H433V233.8ZM433 237.5V249.5H434V237.5ZM434 237.4V249.5H435V237.4ZM435 238.5V249.5H436V238.5ZM436 238.5V249.5H437V238.5ZM437 235.5V249.5H438V235.5ZM438 236.4V249.5H439V236.4ZM439 237.5V249.5H440V237.5ZM440 237.6V249.5H441V237.6ZM441 233.4V249.5H442V233.4ZM442 236.5V249.5H443V236.5ZM443 236.7V249.5H444V236.7Z" fill="#00ffff" shape-rendering="crispEdges"/>
<rect x="72" y="227" width="1" height="22.5" fill="#00ffff" shape-rendering="crispEdges"/>
<rect x="77" y="227" width="1" height="22.5" fill="#00ffff" shape-rendering="crispEdges"/>
<rect x="83" y="218" width="1" height="31.5" fill="#00ffff" shape-rendering="crispEdges"/>
<rect x="90" y="222" width="1" height="27.5" fill="#00ffff" shape-rendering="crispEdges"/>
<rect x="150" y="211" width="1" height="38.5" fill="#00ffff" shape-rendering="crispEdges"/>
<rect x="153" y="218" width="1" height="31.5" fill="#00ffff" shape-rendering="crispEdges"/>
<rect x="180" y="217" width="1" height="32.5" fill="#00ffff" shape-rendering="crispEdges"/>
<rect x="211" y="201" width="1" height="48.5" fill="#00ffff" shape-rendering="crispEdges"/>
<rect x="221" y="194" width="1" height="55.5" fill="#00ffff" shape-rendering="crispEdges"/>
<rect x="242" y="223" width="1" height="26.5" fill="#00ffff" shape-rendering="crispEdges"/>
<rect x="313" y="198" width="1" height="51.5" fill="#00ffff" shape-rendering="crispEdges"/>
<rect x="325" y="206" width="1" height="43.5" fill="#00ffff" shape-rendering="crispEdges"/>
<rect x="355" y="197" width="1" height="52.5" fill="#00ffff" shape-rendering="crispEdges"/>
<rect x="364" y="177" width="1" height="72.5" fill="#00ffff" shape-rendering="crispEdges"/>
<rect x="383" y="168" width="1" height="81.5" fill="#00ffff" shape-rendering="crispEdges"/>
<rect x="404" y="157" width="1" height="92.5" fill="#00ffff" shape-rendering="crispEdges"/>
<rect x="408" y="166" width="1" height="83.5" fill="#00ffff" shape-rendering="crispEdges"/>
<path d="M49 234h1v1h-1ZM50 234h1v1h-1ZM51 234h1v1h-1ZM52 234h1v1h-1ZM53 234h1v1h-1ZM54 234h1v1h-1ZM55 234h1v1h-1ZM56 234h1v1h-1ZM57 234h1v1h-1ZM58 233h1v1h-1ZM59 233h1v1h-1ZM60 233h1v1h-1ZM61 233h1v1h-1ZM62 233h1v1h-1ZM63 233h1v1h-1ZM64 233h1v1h-1ZM65 233h1v1h-1ZM66 232h1v1h-1ZM67 232h1v1h-1ZM68 232h1v1h-1ZM69 232h1v1h-1ZM70 232h1v1h-1ZM71 232h1v1h-1ZM72 232h1v1h-1ZM73 232h1v1h-1ZM74 232h1v1h-1ZM75 232h1v1h-1ZM76 232h1v1h-1ZM77 232h1v1h-1ZM78 232h1v1h-1ZM79 232h1v1h-1ZM80 231h1v1h-1ZM81 231h1v1h-1ZM82 231h1v1h-1ZM83 231h1v1h-1ZM84 231h1v1h-1ZM85 231h1v1h-1ZM86 231h1v1h-1ZM87 231h1v1h-1ZM88 231h1v1h-1ZM89 231h1v1h-1ZM90 231h1v1h-1ZM91 231h1v1h-1ZM92 231h1v1h-1ZM93 231h1v1h-1ZM94 230h1v1h-1ZM95 230h1v1h-1ZM96 230h1v1h-1ZM97 230h1v1h-1ZM98 230h1v1h-1ZM99 230h1v1h-1ZM100 230h1v1h-1ZM101 230h1v1h-1ZM102 230h1v1h-1ZM103 230h1v1h-1ZM104 230h1v1h-1ZM105 230h1v1h-1ZM106 230h1v1h-1ZM107 229h1v1h-1ZM108 229h1v1h-1ZM109 229h1v1h-1ZM110 229h1v1h-1ZM111 229h1v1h-1ZM112 229h1v1h-1ZM113 229h1v1h-1ZM114 229h1v1h-1ZM115 229h1v1h-1ZM116 229h1v1h-1ZM117 229h1v1h-1ZM118 229h1v1h-1ZM119 229h1v1h-1ZM120 229h1v1h-1ZM121 229h1v1h-1ZM122 229h1v1h-1ZM123 229h1v1h-1ZM124 229h1v1h-1ZM125 229h1v1h-1ZM126 228h1v1h-1ZM127 228h1v1h-1ZM128 228h1v1h-1ZM129 228h1v1h-1ZM130 228h1v1h-1ZM131 228h1v1h-1ZM132 228h1v1h-1ZM133 228h1v1h-1ZM134 228h1v1h-1ZM135 228h1v1h-1ZM136 228h1v1h-1ZM137 228h1v1h-1ZM138 228h1v1h-1ZM139 228h1v1h-1ZM140 228h1v1h-1ZM141 228h1v1h-1ZM142 227h1v1h-1ZM143 227h1v1h-1ZM144 227h1v1h-1ZM145 227h1v1h-1ZM146 227h1v1h-1ZM147 227h1v1h-1ZM148 227h1v1h-1ZM149 227h1v1h-1ZM150 227h1v1h-1ZM151 227h1v1h-1ZM152 227h1v1h-1ZM153 227h1v1h-1ZM154 227h1v1h-1ZM155 227h1v1h-1ZM156 227h1v1h-1ZM157 227h1v1h-1ZM158 227h1v1h-1ZM159 226h1v1h-1ZM160 226h1v1h-1ZM161 226h1v1h-1ZM162 226h1v1h-1ZM163 226h1v1h-1ZM164 226h1v1h-1ZM165 226h1v1h-1ZM166 226h1v1h-1ZM167 226h1v1h-1ZM168 226h1v1h-1ZM169 226h1v1h-1ZM170 226h1v1h-1ZM171 226h1v1h-1ZM172 226h1v1h-1ZM173 226h1v1h-1ZM174 226h1v1h-1ZM175 225h1v1h-1ZM176 225h1v1h-1ZM177 225h1v1h-1ZM178 225h1v1h-1ZM179 225h1v1h-1ZM180 225h1v1h-1ZM181 225h1v1h-1ZM182 225h1v1h-1ZM183 225h1v1h-1ZM184 225h1v1h-1ZM185 225h1v1h-1ZM186 225h1v1h-1ZM187 225h1v1h-1ZM188 225h1v1h-1ZM189 225h1v1h-1ZM190 225h1v1h-1ZM191 225h1v1h-1ZM192 224h1v1h-1ZM193 224h1v1h-1ZM194 224h1v1h-1ZM195 224h1v1h-1ZM196 224h1v1h-1ZM197 224h1v1h-1ZM198 224h1v1h-1ZM199 224h1v1h-1ZM200 224h1v1h-1ZM201 224h1v1h-1ZM202 224h1v1h-1ZM203 224h1v1h-1ZM204 224h1v1h-1ZM205 224h1v1h-1ZM206 224h1v1h-1ZM207 224h1v1h-1ZM208 224h1v1h-1ZM209 224h1v1h-1ZM210 224h1v1h-1ZM211 224h1v1h-1ZM212 224h1v1h-1ZM213 224h1v1h-1ZM214 224h1v1h-1ZM215 223h1v1h-1ZM216 223h1v1h-1ZM217 223h1v1h-1ZM218 223h1v1h-1ZM219 223h1v1h-1ZM220 223h1v1h-1ZM221 223h1v1h-1ZM222 223h1v1h-1ZM223 223h1v1h-1ZM224 223h1v1h-1ZM225 223h1v1h-1ZM226 223h1v1h-1ZM227 223h1v1h-1ZM228 223h1v1h-1ZM229 223h1v1h-1ZM230 223h1v1h-1ZM231 223h1v1h-1ZM232 223h1v1h-1ZM233 223h1v1h-1ZM234 223h1v1h-1ZM235 223h1v1h-1ZM236 223h1v1h-1ZM237 223h1v1h-1ZM238 223h1v1h-1ZM239 222h1v1h-1ZM240 222h1v1h-1ZM241 222h1v1h-1ZM242 222h1v1h-1ZM243 222h1v1h-1ZM244 222h1v1h-1ZM245 222h1v1h-1ZM246 222h1v1h-1ZM247 222h1v1h-1ZM248 222h1v1h-1ZM249 222h1v1h-1ZM250 222h1v1h-1ZM251 222h1v1h-1ZM252 222h1v1h-1ZM253 222h1v1h-1ZM254 222h1v1h-1ZM255 222h1v1h-1ZM256 222h1v1h-1ZM257 222h1v1h-1ZM258 222h1v1h-1ZM259 222h1v1h-1ZM260 222h1v1h-1ZM261 222h1v1h-1ZM262 222h1v1h-1ZM263 222h1v1h-1ZM264 222h1v1h-1ZM265 221h1v1h-1ZM266 221h1v1h-1ZM267 221h1v1h-1ZM268 221h1v1h-1ZM269 221h1v1h-1ZM270 221h1v1h-1ZM271 221h1v1h-1ZM272 221h1v1h-1ZM273 221h1v1h-1ZM274 221h1v1h-1ZM275 221h1v1h-1ZM276 221h1v1h-1ZM277 221h1v1h-1ZM278 221h1v1h-1ZM279 221h1v1h-1ZM280 221h1v1h-1ZM281 221h1v1h-1ZM282 220h1v1h-1ZM283 220h1v1h-1ZM284 220h1v1h-1ZM285 220h1v1h-1ZM286 220h1v1h-1ZM287 220h1v1h-1ZM288 220h1v1h-1ZM289 220h1v1h-1ZM290 220h1v1h-1ZM291 220h1v1h-1ZM292 220h1v1h-1ZM293 220h1v1h-1ZM294 220h1v1h-1ZM295 220h1v1h-1ZM296 219h1v1h-1ZM297 219h1v1h-1ZM298 219h1v1h-1ZM299 219h1v1h-1ZM300 219h1v1h-1ZM301 219h1v1h-1ZM302 219h1v1h-1ZM303 219h1v1h-1ZM304 219h1v1h-1ZM305 219h1v1h-1ZM306 219h1v1h-1ZM307 219h1v1h-1ZM308 219h1v1h-1ZM309 219h1v1h-1ZM310 219h1v1h-1ZM311 219h1v1h-1ZM312 219h1v1h-1ZM313 219h1v1h-1ZM314 219h1v1h-1ZM315 219h1v1h-1ZM316 219h1v1h-1ZM317 219h1v1h-1ZM318 219h1v1h-1ZM319 219h1v1h-1ZM320 219h1v1h-1ZM321 219h1v1h-1ZM322 219h1v1h-1ZM323 219h1v1h-1ZM324 219h1v1h-1ZM325 218h1v1h-1ZM326 218h1v1h-1ZM327 218h1v1h-1ZM328 218h1v1h-1ZM329 218h1v1h-1ZM330 218h1v1h-1ZM331 218h1v1h-1ZM332 218h1v1h-1ZM333 218h1v1h-1ZM334 218h1v1h-1ZM335 218h1v1h-1ZM336 218h1v1h-1ZM337 218h1v1h-1ZM338 218h1v1h-1ZM339 218h1v1h-1ZM340 218h1v1h-1ZM341 218h1v1h-1ZM342 218h1v1h-1ZM343 218h1v1h-1ZM344 218h1v1h-1ZM345 218h1v1h-1ZM346 218h1v1h-1ZM347 218h1v1h-1ZM348 218h1v1h-1ZM349 218h1v1h-1ZM350 218h1v1h-1ZM351 218h1v1h-1ZM352 218h1v1h-1ZM353 218h1v1h-1ZM354 218h1v1h-1ZM355 218h1v1h-1ZM356 218h1v1h-1ZM357 218h1v1h-1ZM358 217h1v1h-1ZM359 217h1v1h-1ZM360 217h1v1h-1ZM361 217h1v1h-1ZM362 217h1v1h-1ZM363 217h1v1h-1ZM364 217h1v1h-1ZM365 217h1v1h-1ZM366 217h1v1h-1ZM367 217h1v1h-1ZM368 217h1v1h-1ZM369 217h1v1h-1ZM370 217h1v1h-1ZM371 217h1v1h-1ZM372 217h1v1h-1ZM373 217h1v1h-1ZM374 217h1v1h-1ZM375 217h1v1h-1ZM376 217h1v1h-1ZM377 217h1v1h-1ZM378 217h1v1h-1ZM379 217h1v1h-1ZM380 216h1v1h-1ZM381 216h1v1h-1ZM382 216h1v1h-1ZM383 216h1v1h-1ZM384 216h1v1h-1ZM385 216h1v1h-1ZM386 216h1v1h-1ZM387 216h1v1h-1ZM388 216h1v1h-1ZM389 216h1v1h-1ZM390 216h1v1h-1ZM391 216h1v1h-1ZM392 216h1v1h-1ZM393 216h1v1h-1ZM394 216h1v1h-1ZM395 216h1v1h-1ZM396 216h1v1h-1ZM397 216h1v1h-1ZM398 216h1v1h-1ZM399 216h1v1h-1ZM400 216h1v1h-1ZM401 216h1v1h-1ZM402 216h1v1h-1ZM403 215h1v1h-1ZM404 215h1v1h-1ZM405 215h1v1h-1ZM406 215h1v1h-1ZM407 215h1v1h-1ZM408 215h1v1h-1ZM409 215h1v1h-1ZM410 215h1v1h-1ZM411 215h1v1h-1ZM412 215h1v1h-1ZM413 215h1v1h-1ZM414 215h1v1h-1ZM415 215h1v1h-1ZM416 215h1v1h-1ZM417 215h1v1h-1ZM418 215h1v1h-1ZM419 215h1v1h-1ZM420 215h1v1h-1ZM421 215h1v1h-1ZM422 215h1v1h-1ZM423 215h1v1h-1ZM424 215h1v1h-1ZM425 214h1v1h-1ZM426 214h1v1h-1ZM427 214h1v1h-1ZM428 214h1v1h-1ZM429 214h1v1h-1ZM430 214h1v1h-1ZM431 214h1v1h-1ZM432 214h1v1h-1ZM433 214h1v1h-1ZM434 214h1v1h-1ZM435 214h1v1h-1ZM436 214h1v1h-1ZM437 214h1v1h-1ZM438 214h1v1h-1ZM439 214h1v1h-1ZM440 214h1v1h-1ZM441 214h1v1h-1Z" fill="#2cc05c" shape-rendering="crispEdges"/>
<rect x="49" y="351.8" width="1" height="59.9" fill="#ff2a00"/>
<rect x="49" y="371.7" width="1" height="39.9" fill="#ffaa00"/>
<rect x="49" y="378.4" width="1" height="33.2" fill="#ffd800"/>
<rect x="49" y="385.0" width="1" height="26.6" fill="#ffff00"/>
<rect x="49" y="391.7" width="1" height="19.9" fill="#b4ff00"/>
<rect x="50" y="371.7" width="1" height="39.9" fill="#ffaa00"/>
<rect x="50" y="378.4" width="1" height="33.2" fill="#ffd800"/>
<rect x="50" y="385.0" width="1" height="26.6" fill="#ffff00"/>
<rect x="50" y="391.7" width="1" height="19.9" fill="#b4ff00"/>
<rect x="51" y="371.7" width="1" height="39.9" fill="#ffaa00"/>
<rect x="51" y="378.4" width="1" height="33.2" fill="#ffd800"/>
<rect x="51" y="385.0" width="1" height="26.6" fill="#ffff00"/>
<rect x="51" y="391.7" width="1" height="19.9" fill="#b4ff00"/>
<rect x="52" y="378.4" width="1" height="33.2" fill="#ffd800"/>
<rect x="52" y="385.0" width="1" height="26.6" fill="#ffff00"/>
<rect x="52" y="391.7" width="1" height="19.9" fill="#b4ff00"/>
<rect x="53" y="385.0" width="1" height="26.6" fill="#ffff00"/>
<rect x="53" y="391.7" width="1" height="19.9" fill="#b4ff00"/>
<rect x="54" y="385.0" width="1" height="26.6" fill="#ffff00"/>
<rect x="54" y="391.7" width="1" height="19.9" fill="#b4ff00"/>
<rect x="55" y="378.4" width="1" height="33.2" fill="#ffd800"/>
<rect x="55" y="385.0" width="1" height="26.6" fill="#ffff00"/>
<rect x="55" y="391.7" width="1" height="19.9" fill="#b4ff00"/>
<rect x="56" y="365.1" width="1" height="46.6" fill="#ff7000"/>
<rect x="56" y="378.4" width="1" height="33.2" fill="#ffd800"/>
<rect x="56" y="385.0" width="1" height="26.6" fill="#ffff00"/>
<rect x="56" y="391.7" width="1" height="19.9" fill="#b4ff00"/>
<rect x="57" y="365.1" width="1" height="46.6" fill="#ff7000"/>
<rect x="57" y="378.4" width="1" height="33.2" fill="#ffd800"/>
<rect x="57" y="385.0" width="1" height="26.6" fill="#ffff00"/>
<rect x="57" y="391.7" width="1" height="19.9" fill="#b4ff00"/>
<rect x="58" y="378.4" width="1" height="33.2" fill="#ffd800"/>
<rect x="58" y="385.0" width="1" height="26.6" fill="#ffff00"/>
<rect x="58" y="391.7" width="1" height="19.9" fill="#b4ff00"/>
<rect x="59" y="385.0" width="1" height="26.6" fill="#ffff00"/>
<rect x="59" y="391.7" width="1" height="19.9" fill="#b4ff00"/>
<rect x="60" y="391.7" width="1" height="19.9" fill="#b4ff00"/>
<rect x="61" y="391.7" width="1" height="19.9" fill="#b4ff00"/>
<rect x="62" y="385.0" width="1" height="26.6" fill="#ffff00"/>
<rect x="62" y="391.7" width="1" height="19.9" fill="#b4ff00"/>
<rect x="63" y="385.0" width="1" height="26.6" fill="#ffff00"/>
<rect x="63" y="391.7" width="1" height="19.9" fill="#b4ff00"/>
<rect x="64" y="371.7" width="1" height="39.9" fill="#ffaa00"/>
<rect x="64" y="378.4" width="1" height="33.2" fill="#ffd800"/>
<rect x="64" y="385.0" width="1" height="26.6" fill="#ffff00"/>
<rect x="64" y="391.7" width="1" height="19.9" fill="#b4ff00"/>
<rect x="65" y="371.7" width="1" height="39.9" fill="#ffaa00"/>
<rect x="65" y="378.4" width="1" height="33.2" fill="#ffd800"/>
<rect x="65" y="385.0" width="1" height="26.6" fill="#ffff00"/>
<rect x="65" y="391.7" width="1" height="19.9" fill="#b4ff00"/>
<rect x="66" y="378.4" width="1" height="33.2" fill="#ffd800"/>
<rect x="66" y="385.0" width="1" height="26.6" fill="#ffff00"/>
<rect x="66" y="391.7" width="1" height="19.9" fill="#b4ff00"/>
<rect x="67" y="371.7" width="1" height="39.9" fill="#ffaa00"/>
<rect x="67" y="378.4" width="1" height="33.2" fill="#ffd800"/>
<rect x="67" y="385.0" width="1" height="26.6" fill="#ffff00"/>
<rect x="67" y="391.7" width="1" height="19.9" fill="#b4ff00"/>
<rect x="68" y="365.1" width="1" height="46.6" fill="#ff7000"/>
<rect x="68" y="378.4" width="1" height="33.2" fill="#ffd800"/>
<rect x="68" y="385.0" width="1" height="26.6" fill="#ffff00"/>
<rect x="69" y="351.8" width="1" height="59.9" fill="#ff2a00"/>
<rect x="69" y="365.1" width="1" height="46.6" fill="#ff7000"/>
<rect x="69" y="378.4" width="1" height="33.2" fill="#ffd800"/>
<rect x="70" y="351.8" width="1" height="59.9" fill="#ff2a00"/>
<rect x="70" y="365.1" width="1" height="46.6" fill="#ff7000"/>
<rect x="70" y="378.4" width="1" height="33.2" fill="#ffd800"/>
<rect x="71" y="351.8" width="1" height="59.9" fill="#ff2a00"/>
<rect x="71" y="358.4" width="1" height="53.2" fill="#ff4a00"/>
<rect x="71" y="371.7" width="1" height="39.9" fill="#ffaa00"/>
<rect x="72" y="345.1" width="1" height="66.5" fill="#ff2a00"/>
<rect x="72" y="351.8" width="1" height="59.9" fill="#ff2a00"/>
<rect x="72" y="371.7" width="1" height="39.9" fill="#ffaa00"/>
<rect x="73" y="345.1" width="1" height="66.5" fill="#ff2a00"/>
<rect x="73" y="351.8" width="1" height="59.9" fill="#ff2a00"/>
<rect x="73" y="365.1" width="1" height="46.6" fill="#ff7000"/>
<rect x="74" y="345.1" width="1" height="66.5" fill="#ff2a00"/>
<rect x="74" y="351.8" width="1" height="59.9" fill="#ff2a00"/>
<rect x="74" y="365.1" width="1" height="46.6" fill="#ff7000"/>
<rect x="75" y="351.8" width="1" height="59.9" fill="#ff2a00"/>
<rect x="75" y="358.4" width="1" height="53.2" fill="#ff4a00"/>
<rect x="75" y="371.7" width="1" height="39.9" fill="#ffaa00"/>
<rect x="76" y="338.5" width="1" height="73.1" fill="#c83028"/>
<rect x="76" y="351.8" width="1" height="59.9" fill="#ff2a00"/>
<rect x="76" y="358.4" width="1" height="53.2" fill="#ff4a00"/>
<rect x="77" y="358.4" width="1" height="53.2" fill="#ff4a00"/>
<rect x="77" y="365.1" width="1" height="46.6" fill="#ff7000"/>
<rect x="77" y="371.7" width="1" height="39.9" fill="#ffaa00"/>
<rect x="78" y="358.4" width="1" height="53.2" fill="#ff4a00"/>
<rect x="78" y="365.1" width="1" height="46.6" fill="#ff7000"/>
<rect x="78" y="371.7" width="1" height="39.9" fill="#ffaa00"/>
<rect x="79" y="358.4" width="1" height="53.2" fill="#ff4a00"/>
<rect x="79" y="371.7" width="1" height="39.9" fill="#ffaa00"/>
<rect x="79" y="378.4" width="1" height="33.2" fill="#ffd800"/>
<rect x="80" y="358.4" width="1" height="53.2" fill="#ff4a00"/>
<rect x="80" y="371.7" width="1" height="39.9" fill="#ffaa00"/>
<rect x="80" y="378.4" width="1" height="33.2" fill="#ffd800"/>
<rect x="81" y="358.4" width="1" height="53.2" fill="#ff4a00"/>
<rect x="81" y="371.7" width="1" height="39.9" fill="#ffaa00"/>
<rect x="81" y="378.4" width="1" height="33.2" fill="#ffd800"/>
<rect x="82" y="331.8" width="1" height="79.8" fill="#c83028"/>
<rect x="82" y="351.8" width="1" height="59.9" fill="#ff2a00"/>
<rect x="82" y="358.4" width="1" height="53.2" fill="#ff4a00"/>
<rect x="83" y="351.8" width="1" height="59.9" fill="#ff2a00"/>
<rect x="83" y="358.4" width="1" height="53.2" fill="#ff4a00"/>
<rect x="84" y="351.8" width="1" height="59.9" fill="#ff2a00"/>
<rect x="84" y="358.4" width="1" height="53.2" fill="#ff4a00"/>
<rect x="84" y="365.1" width="1" height="46.6" fill="#ff7000"/>
<rect x="85" y="338.5" width="1" height="73.1" fill="#c83028"/>
<rect x="85" y="351.8" width="1" height="59.9" fill="#ff2a00"/>
<rect x="85" y="365.1" width="1" height="46.6" fill="#ff7000"/>
<rect x="86" y="351.8" width="1" height="59.9" fill="#ff2a00"/>
<rect x="86" y="358.4" width="1" height="53.2" fill="#ff4a00"/>
<rect x="86" y="371.7" width="1" height="39.9" fill="#ffaa00"/>
<rect x="87" y="345.1" width="1" height="66.5" fill="#ff2a00"/>
<rect x="87" y="351.8" width="1" height="59.9" fill="#ff2a00"/>
<rect x="87" y="358.4" width="1" height="53.2" fill="#ff4a00"/>
<rect x="88" y="345.1" width="1" height="66.5" fill="#ff2a00"/>
<rect x="88" y="351.8" width="1" height="59.9" fill="#ff2a00"/>
<rect x="88" y="365.1" width="1" height="46.6" fill="#ff7000"/>
<rect x="89" y="345.1" width="1" height="66.5" fill="#ff2a00"/>
<rect x="89" y="351.8" width="1" height="59.9" fill="#ff2a00"/>
<rect x="89" y="358.4" width="1" height="53.2" fill="#ff4a00"/>
<rect x="90" y="325.2" width="1" height="86.4" fill="#c83028"/>
<rect x="90" y="351.8" width="1" height="59.9" fill="#ff2a00"/>
<rect x="90" y="365.1" width="1" height="46.6" fill="#ff7000"/>
<rect x="91" y="345.1" width="1" height="66.5" fill="#ff2a00"/>
<rect x="91" y="351.8" width="1" height="59.9" fill="#ff2a00"/>
<rect x="91" y="365.1" width="1" height="46.6" fill="#ff7000"/>
<rect x="92" y="345.1" width="1" height="66.5" fill="#ff2a00"/>
<rect x="92" y="351.8" width="1" height="59.9" fill="#ff2a00"/>
<rect x="92" y="371.7" width="1" height="39.9" fill="#ffaa00"/>
<rect x="93" y="391.7" width="1" height="19.9" fill="#b4ff00"/>
<rect x="94" y="405.0" width="1" height="6.6" fill="#44ff00"/>
<rect x="95" y="405.0" width="1" height="6.6" fill="#44ff00"/>
<rect x="96" y="405.0" width="1" height="6.6" fill="#44ff00"/>
<rect x="97" y="405.0" width="1" height="6.6" fill="#44ff00"/>
<rect x="98" y="398.3" width="1" height="13.3" fill="#88ff10"/>
<rect x="98" y="405.0" width="1" height="6.6" fill="#44ff00"/>
<rect x="99" y="391.7" width="1" height="19.9" fill="#b4ff00"/>
<rect x="99" y="398.3" width="1" height="13.3" fill="#88ff10"/>
<rect x="99" y="405.0" width="1" height="6.6" fill="#44ff00"/>
<rect x="100" y="398.3" width="1" height="13.3" fill="#88ff10"/>
<rect x="101" y="398.3" width="1" height="13.3" fill="#88ff10"/>
<rect x="101" y="405.0" width="1" height="6.6" fill="#44ff00"/>
<rect x="102" y="398.3" width="1" height="13.3" fill="#88ff10"/>
<rect x="102" y="405.0" width="1" height="6.6" fill="#44ff00"/>
<rect x="103" y="405.0" width="1" height="6.6" fill="#44ff00"/>
<rect x="104" y="405.0" width="1" height="6.6" fill="#44ff00"/>
<rect x="105" y="405.0" width="1" height="6.6" fill="#44ff00"/>
<rect x="106" y="405.0" width="1" height="6.6" fill="#44ff00"/>
<rect x="107" y="398.3" width="1" height="13.3" fill="#88ff10"/>
<rect x="107" y="405.0" width="1" height="6.6" fill="#44ff00"/>
<rect x="108" y="405.0" width="1" height="6.6" fill="#44ff00"/>
<rect x="109" y="398.3" width="1" height="13.3" fill="#88ff10"/>
<rect x="109" y="405.0" width="1" height="6.6" fill="#44ff00"/>
<rect x="110" y="398.3" width="1" height="13.3" fill="#88ff10"/>
<rect x="110" y="405.0" width="1" height="6.6" fill="#44ff00"/>
<rect x="111" y="398.3" width="1" height="13.3" fill="#88ff10"/>
<rect x="111" y="405.0" width="1" height="6.6" fill="#44ff00"/>
<rect x="112" y="398.3" width="1" height="13.3" fill="#88ff10"/>
<rect x="112" y="405.0" width="1" height="6.6" fill="#44ff00"/>
<rect x="113" y="398.3" width="1" height="13.3" fill="#88ff10"/>
<rect x="113" y="405.0" width="1" height="6.6" fill="#44ff00"/>
<rect x="114" y="398.3" width="1" height="13.3" fill="#88ff10"/>
<rect x="114" y="405.0" width="1" height="6.6" fill="#44ff00"/>
<rect x="115" y="391.7" width="1" height="19.9" fill="#b4ff00"/>
<rect x="115" y="398.3" width="1" height="13.3" fill="#88ff10"/>
<rect x="116" y="398.3" width="1" height="13.3" fill="#88ff10"/>
<rect x="116" y="405.0" width="1" height="6.6" fill="#44ff00"/>
<rect x="117" y="405.0" width="1" height="6.6" fill="#44ff00"/>
<rect x="118" y="398.3" width="1" height="13.3" fill="#88ff10"/>
<rect x="118" y="405.0" width="1" height="6.6" fill="#44ff00"/>
<rect x="119" y="405.0" width="1" height="6.6" fill="#44ff00"/>
<rect x="120" y="398.3" width="1" height="13.3" fill="#88ff10"/>
<rect x="121" y="405.0" width="1" height="6.6" fill="#44ff00"/>
<rect x="122" y="398.3" width="1" height="13.3" fill="#88ff10"/>
<rect x="123" y="398.3" width="1" height="13.3" fill="#88ff10"/>
<rect x="123" y="405.0" width="1" height="6.6" fill="#44ff00"/>
<rect x="124" y="398.3" width="1" height="13.3" fill="#88ff10"/>
<rect x="124" y="405.0" width="1" height="6.6" fill="#44ff00"/>
<rect x="125" y="385.0" width="1" height="26.6" fill="#ffff00"/>
<rect x="125" y="398.3" width="1" height="13.3" fill="#88ff10"/>
<rect x="125" y="405.0" width="1" height="6.6" fill="#44ff00"/>
<rect x="126" y="398.3" width="1" height="13.3" fill="#88ff10"/>
<rect x="126" y="405.0" width="1" height="6.6" fill="#44ff00"/>
<rect x="127" y="398.3" width="1" height="13.3" fill="#88ff10"/>
<rect x="127" y="405.0" width="1" height="6.6" fill="#44ff00"/>
<rect x="128" y="398.3" width="1" height="13.3" fill="#88ff10"/>
<rect x="128" y="405.0" width="1" height="6.6" fill="#44ff00"/>
<rect x="129" y="391.7" width="1" height="19.9" fill="#b4ff00"/>
<rect x="129" y="398.3" width="1" height="13.3" fill="#88ff10"/>
<rect x="129" y="405.0" width="1" height="6.6" fill="#44ff00"/>
<rect x="130" y="391.7" width="1" height="19.9" fill="#b4ff00"/>
<rect x="130" y="398.3" width="1" height="13.3" fill="#88ff10"/>
<rect x="130" y="405.0" width="1" height="6.6" fill="#44ff00"/>
<rect x="131" y="391.7" width="1" height="19.9" fill="#b4ff00"/>
<rect x="131" y="398.3" width="1" height="13.3" fill="#88ff10"/>
<rect x="131" y="405.0" width="1" height="6.6" fill="#44ff00"/>
<rect x="132" y="391.7" width="1" height="19.9" fill="#b4ff00"/>
<rect x="132" y="398.3" width="1" height="13.3" fill="#88ff10"/>
<rect x="132" y="405.0" width="1" height="6.6" fill="#44ff00"/>
<rect x="133" y="391.7" width="1" height="19.9" fill="#b4ff00"/>
<rect x="134" y="385.0" width="1" height="26.6" fill="#ffff00"/>
<rect x="134" y="391.7" width="1" height="19.9" fill="#b4ff00"/>
<rect x="134" y="405.0" width="1" height="6.6" fill="#44ff00"/>
<rect x="135" y="385.0" width="1" height="26.6" fill="#ffff00"/>
<rect x="135" y="391.7" width="1" height="19.9" fill="#b4ff00"/>
<rect x="135" y="398.3" width="1" height="13.3" fill="#88ff10"/>
<rect x="135" y="405.0" width="1" height="6.6" fill="#44ff00"/>
<rect x="136" y="378.4" width="1" height="33.2" fill="#ffd800"/>
<rect x="136" y="385.0" width="1" height="26.6" fill="#ffff00"/>
<rect x="136" y="391.7" width="1" height="19.9" fill="#b4ff00"/>
<rect x="136" y="398.3" width="1" height="13.3" fill="#88ff10"/>
<rect x="137" y="378.4" width="1" height="33.2" fill="#ffd800"/>
<rect x="137" y="385.0" width="1" height="26.6" fill="#ffff00"/>
<rect x="137" y="391.7" width="1" height="19.9" fill="#b4ff00"/>
<rect x="138" y="385.0" width="1" height="26.6" fill="#ffff00"/>
<rect x="138" y="391.7" width="1" height="19.9" fill="#b4ff00"/>
<rect x="138" y="398.3" width="1" height="13.3" fill="#88ff10"/>
<rect x="139" y="385.0" width="1" height="26.6" fill="#ffff00"/>
<rect x="139" y="391.7" width="1" height="19.9" fill="#b4ff00"/>
<rect x="139" y="405.0" width="1" height="6.6" fill="#44ff00"/>
<rect x="140" y="391.7" width="1" height="19.9" fill="#b4ff00"/>
<rect x="140" y="405.0" width="1" height="6.6" fill="#44ff00"/>
<rect x="141" y="391.7" width="1" height="19.9" fill="#b4ff00"/>
<rect x="141" y="398.3" width="1" height="13.3" fill="#88ff10"/>
<rect x="141" y="405.0" width="1" height="6.6" fill="#44ff00"/>
<rect x="142" y="371.7" width="1" height="39.9" fill="#ffaa00"/>
<rect x="142" y="385.0" width="1" height="26.6" fill="#ffff00"/>
<rect x="142" y="405.0" width="1" height="6.6" fill="#44ff00"/>
<rect x="143" y="385.0" width="1" height="26.6" fill="#ffff00"/>
<rect x="143" y="391.7" width="1" height="19.9" fill="#b4ff00"/>
<rect x="143" y="398.3" width="1" height="13.3" fill="#88ff10"/>
<rect x="143" y="405.0" width="1" height="6.6" fill="#44ff00"/>
<rect x="144" y="385.0" width="1" height="26.6" fill="#ffff00"/>
<rect x="144" y="391.7" width="1" height="19.9" fill="#b4ff00"/>
<rect x="144" y="405.0" width="1" height="6.6" fill="#44ff00"/>
<rect x="145" y="378.4" width="1" height="33.2" fill="#ffd800"/>
<rect x="145" y="385.0" width="1" height="26.6" fill="#ffff00"/>
<rect x="145" y="391.7" width="1" height="19.9" fill="#b4ff00"/>
<rect x="145" y="398.3" width="1" height="13.3" fill="#88ff10"/>
<rect x="145" y="405.0" width="1" height="6.6" fill="#44ff00"/>
<rect x="146" y="378.4" width="1" height="33.2" fill="#ffd800"/>
<rect x="146" y="385.0" width="1" height="26.6" fill="#ffff00"/>
<rect x="146" y="391.7" width="1" height="19.9" fill="#b4ff00"/>
<rect x="146" y="398.3" width="1" height="13.3" fill="#88ff10"/>
<rect x="146" y="405.0" width="1" height="6.6" fill="#44ff00"/>
<rect x="147" y="391.7" width="1" height="19.9" fill="#b4ff00"/>
<rect x="147" y="398.3" width="1" height="13.3" fill="#88ff10"/>
<rect x="147" y="405.0" width="1" height="6.6" fill="#44ff00"/>
<rect x="148" y="391.7" width="1" height="19.9" fill="#b4ff00"/>
<rect x="149" y="385.0" width="1" height="26.6" fill="#ffff00"/>
<rect x="149" y="405.0" width="1" height="6.6" fill="#44ff00"/>
<rect x="150" y="378.4" width="1" height="33.2" fill="#ffd800"/>
<rect x="150" y="385.0" width="1" height="26.6" fill="#ffff00"/>
<rect x="150" y="405.0" width="1" height="6.6" fill="#44ff00"/>
<rect x="151" y="391.7" width="1" height="19.9" fill="#b4ff00"/>
<rect x="151" y="405.0" width="1" height="6.6" fill="#44ff00"/>
<rect x="152" y="391.7" width="1" height="19.9" fill="#b4ff00"/>
<rect x="152" y="405.0" width="1" height="6.6" fill="#44ff00"/>
<rect x="153" y="378.4" width="1" height="33.2" fill="#ffd800"/>
<rect x="153" y="398.3" width="1" height="13.3" fill="#88ff10"/>
<rect x="153" y="405.0" width="1" height="6.6" fill="#44ff00"/>
<rect x="154" y="358.4" width="1" height="53.2" fill="#ff4a00"/>
<rect x="154" y="378.4" width="1" height="33.2" fill="#ffd800"/>
<rect x="154" y="398.3" width="1" height="13.3" fill="#88ff10"/>
<rect x="154" y="405.0" width="1" height="6.6" fill="#44ff00"/>
<rect x="155" y="378.4" width="1" height="33.2" fill="#ffd800"/>
<rect x="155" y="391.7" width="1" height="19.9" fill="#b4ff00"/>
<rect x="155" y="398.3" width="1" height="13.3" fill="#88ff10"/>
<rect x="155" y="405.0" width="1" height="6.6" fill="#44ff00"/>
<rect x="156" y="391.7" width="1" height="19.9" fill="#b4ff00"/>
<rect x="156" y="398.3" width="1" height="13.3" fill="#88ff10"/>
<rect x="156" y="405.0" width="1" height="6.6" fill="#44ff00"/>
<rect x="157" y="391.7" width="1" height="19.9" fill="#b4ff00"/>
<rect x="157" y="398.3" width="1" height="13.3" fill="#88ff10"/>
<rect x="158" y="398.3" width="1" height="13.3" fill="#88ff10"/>
<rect x="158" y="405.0" width="1" height="6.6" fill="#44ff00"/>
<rect x="159" y="391.7" width="1" height="19.9" fill="#b4ff00"/>
<rect x="159" y="398.3" width="1" height="13.3" fill="#88ff10"/>
<rect x="160" y="391.7" width="1" height="19.9" fill="#b4ff00"/>
<rect x="160" y="398.3" width="1" height="13.3" fill="#88ff10"/>
<rect x="160" y="405.0" width="1" height="6.6" fill="#44ff00"/>
<rect x="161" y="385.0" width="1" height="26.6" fill="#ffff00"/>
<rect x="161" y="391.7" width="1" height="19.9" fill="#b4ff00"/>
<rect x="161" y="398.3" width="1" height="13.3" fill="#88ff10"/>
<rect x="162" y="398.3" width="1" height="13.3" fill="#88ff10"/>
<rect x="163" y="398.3" width="1" height="13.3" fill="#88ff10"/>
<rect x="163" y="405.0" width="1" height="6.6" fill="#44ff00"/>
<rect x="164" y="385.0" width="1" height="26.6" fill="#ffff00"/>
<rect x="164" y="391.7" width="1" height="19.9" fill="#b4ff00"/>
<rect x="164" y="398.3" width="1" height="13.3" fill="#88ff10"/>
<rect x="164" y="405.0" width="1" height="6.6" fill="#44ff00"/>
<rect x="165" y="385.0" width="1" height="26.6" fill="#ffff00"/>
<rect x="165" y="391.7" width="1" height="19.9" fill="#b4ff00"/>
<rect x="165" y="398.3" width="1" height="13.3" fill="#88ff10"/>
<rect x="165" y="405.0" width="1" height="6.6" fill="#44ff00"/>
<rect x="166" y="398.3" width="1" height="13.3" fill="#88ff10"/>
<rect x="167" y="391.7" width="1" height="19.9" fill="#b4ff00"/>
<rect x="167" y="398.3" width="1" height="13.3" fill="#88ff10"/>
<rect x="167" y="405.0" width="1" height="6.6" fill="#44ff00"/>
<rect x="168" y="391.7" width="1" height="19.9" fill="#b4ff00"/>
<rect x="168" y="398.3" width="1" height="13.3" fill="#88ff10"/>
<rect x="168" y="405.0" width="1" height="6.6" fill="#44ff00"/>
<rect x="169" y="398.3" width="1" height="13.3" fill="#88ff10"/>
<rect x="169" y="405.0" width="1" height="6.6" fill="#44ff00"/>
<rect x="170" y="405.0" width="1" height="6.6" fill="#44ff00"/>
<rect x="171" y="405.0" width="1" height="6.6" fill="#44ff00"/>
<rect x="172" y="398.3" width="1" height="13.3" fill="#88ff10"/>
<rect x="172" y="405.0" width="1" height="6.6" fill="#44ff00"/>
<rect x="173" y="398.3" width="1" height="13.3" fill="#88ff10"/>
<rect x="173" y="405.0" width="1" height="6.6" fill="#44ff00"/>
<rect x="174" y="398.3" width="1" height="13.3" fill="#88ff10"/>
<rect x="174" y="405.0" width="1" height="6.6" fill="#44ff00"/>
<rect x="175" y="405.0" width="1" height="6.6" fill="#44ff00"/>
<rect x="176" y="398.3" width="1" height="13.3" fill="#88ff10"/>
<rect x="176" y="405.0" width="1" height="6.6" fill="#44ff00"/>
<rect x="177" y="391.7" width="1" height="19.9" fill="#b4ff00"/>
<rect x="177" y="398.3" width="1" height="13.3" fill="#88ff10"/>
<rect x="177" y="405.0" width="1" height="6.6" fill="#44ff00"/>
<rect x="178" y="398.3" width="1" height="13.3" fill="#88ff10"/>
<rect x="178" y="405.0" width="1" height="6.6" fill="#44ff00"/>
<rect x="179" y="398.3" width="1" height="13.3" fill="#88ff10"/>
<rect x="179" y="405.0" width="1" height="6.6" fill="#44ff00"/>
<rect x="180" y="398.3" width="1" height="13.3" fill="#88ff10"/>
<rect x="180" y="405.0" width="1" height="6.6" fill="#44ff00"/>
<rect x="181" y="405.0" width="1" height="6.6" fill="#44ff00"/>
<rect x="182" y="391.7" width="1" height="19.9" fill="#b4ff00"/>
<rect x="182" y="398.3" width="1" height="13.3" fill="#88ff10"/>
<rect x="182" y="405.0" width="1" height="6.6" fill="#44ff00"/>
<rect x="183" y="398.3" width="1" height="13.3" fill="#88ff10"/>
<rect x="183" y="405.0" width="1" height="6.6" fill="#44ff00"/>
<rect x="184" y="385.0" width="1" height="26.6" fill="#ffff00"/>
<rect x="184" y="398.3" width="1" height="13.3" fill="#88ff10"/>
<rect x="184" y="405.0" width="1" height="6.6" fill="#44ff00"/>
<rect x="185" y="398.3" width="1" height="13.3" fill="#88ff10"/>
<rect x="185" y="405.0" width="1" height="6.6" fill="#44ff00"/>
<rect x="186" y="398.3" width="1" height="13.3" fill="#88ff10"/>
<rect x="186" y="405.0" width="1" height="6.6" fill="#44ff00"/>
<rect x="187" y="391.7" width="1" height="19.9" fill="#b4ff00"/>
<rect x="187" y="398.3" width="1" height="13.3" fill="#88ff10"/>
<rect x="188" y="398.3" width="1" height="13.3" fill="#88ff10"/>
<rect x="188" y="405.0" width="1" height="6.6" fill="#44ff00"/>
<rect x="189" y="398.3" width="1" height="13.3" fill="#88ff10"/>
<rect x="189" y="405.0" width="1" height="6.6" fill="#44ff00"/>
<rect x="190" y="398.3" width="1" height="13.3" fill="#88ff10"/>
<rect x="190" y="405.0" width="1" height="6.6" fill="#44ff00"/>
<rect x="191" y="405.0" width="1" height="6.6" fill="#44ff00"/>
<rect x="192" y="398.3" width="1" height="13.3" fill="#88ff10"/>
<rect x="192" y="405.0" width="1" height="6.6" fill="#44ff00"/>
<rect x="193" y="405.0" width="1" height="6.6" fill="#44ff00"/>
<rect x="194" y="405.0" width="1" height="6.6" fill="#44ff00"/>
<rect x="195" y="405.0" width="1" height="6.6" fill="#44ff00"/>
<rect x="196" y="398.3" width="1" height="13.3" fill="#88ff10"/>
<rect x="196" y="405.0" width="1" height="6.6" fill="#44ff00"/>
<rect x="197" y="405.0" width="1" height="6.6" fill="#44ff00"/>
<rect x="198" y="398.3" width="1" height="13.3" fill="#88ff10"/>
<rect x="198" y="405.0" width="1" height="6.6" fill="#44ff00"/>
<rect x="199" y="405.0" width="1" height="6.6" fill="#44ff00"/>
<rect x="200" y="405.0" width="1" height="6.6" fill="#44ff00"/>
<rect x="201" y="405.0" width="1" height="6.6" fill="#44ff00"/>
<rect x="202" y="398.3" width="1" height="13.3" fill="#88ff10"/>
<rect x="203" y="405.0" width="1" height="6.6" fill="#44ff00"/>
<rect x="204" y="405.0" width="1" height="6.6" fill="#44ff00"/>
<rect x="205" y="405.0" width="1" height="6.6" fill="#44ff00"/>
<rect x="206" y="405.0" width="1" height="6.6" fill="#44ff00"/>
<rect x="207" y="405.0" width="1" height="6.6" fill="#44ff00"/>
<rect x="208" y="398.3" width="1" height="13.3" fill="#88ff10"/>
<rect x="208" y="405.0" width="1" height="6.6" fill="#44ff00"/>
<rect x="209" y="405.0" width="1" height="6.6" fill="#44ff00"/>
<rect x="210" y="405.0" width="1" height="6.6" fill="#44ff00"/>
<rect x="211" y="405.0" width="1" height="6.6" fill="#44ff00"/>
<rect x="212" y="405.0" width="1" height="6.6" fill="#44ff00"/>
<rect x="213" y="398.3" width="1" height="13.3" fill="#88ff10"/>
<rect x="213" y="405.0" width="1" height="6.6" fill="#44ff00"/>
<rect x="214" y="398.3" width="1" height="13.3" fill="#88ff10"/>
<rect x="214" y="405.0" width="1" height="6.6" fill="#44ff00"/>
<rect x="215" y="405.0" width="1" height="6.6" fill="#44ff00"/>
<rect x="216" y="405.0" width="1" height="6.6" fill="#44ff00"/>
<rect x="217" y="405.0" width="1" height="6.6" fill="#44ff00"/>
<rect x="218" y="405.0" width="1" height="6.6" fill="#44ff00"/>
<rect x="219" y="398.3" width="1" height="13.3" fill="#88ff10"/>
<rect x="219" y="405.0" width="1" height="6.6" fill="#44ff00"/>
<rect x="220" y="405.0" width="1" height="6.6" fill="#44ff00"/>
<rect x="221" y="391.7" width="1" height="19.9" fill="#b4ff00"/>
<rect x="221" y="398.3" width="1" height="13.3" fill="#88ff10"/>
<rect x="222" y="398.3" width="1" height="13.3" fill="#88ff10"/>
<rect x="222" y="405.0" width="1" height="6.6" fill="#44ff00"/>
<rect x="223" y="398.3" width="1" height="13.3" fill="#88ff10"/>
<rect x="223" y="405.0" width="1" height="6.6" fill="#44ff00"/>
<rect x="224" y="405.0" width="1" height="6.6" fill="#44ff00"/>
<rect x="225" y="398.3" width="1" height="13.3" fill="#88ff10"/>
<rect x="225" y="405.0" width="1" height="6.6" fill="#44ff00"/>
<rect x="226" y="405.0" width="1" height="6.6" fill="#44ff00"/>
<rect x="227" y="405.0" width="1" height="6.6" fill="#44ff00"/>
<rect x="228" y="405.0" width="1" height="6.6" fill="#44ff00"/>
<rect x="229" y="398.3" width="1" height="13.3" fill="#88ff10"/>
<rect x="230" y="405.0" width="1" height="6.6" fill="#44ff00"/>
<rect x="231" y="405.0" width="1" height="6.6" fill="#44ff00"/>
<rect x="232" y="405.0" width="1" height="6.6" fill="#44ff00"/>
<rect x="233" y="398.3" width="1" height="13.3" fill="#88ff10"/>
<rect x="233" y="405.0" width="1" height="6.6" fill="#44ff00"/>
<rect x="234" y="391.7" width="1" height="19.9" fill="#b4ff00"/>
<rect x="234" y="398.3" width="1" height="13.3" fill="#88ff10"/>
<rect x="234" y="405.0" width="1" height="6.6" fill="#44ff00"/>
<rect x="235" y="405.0" width="1" height="6.6" fill="#44ff00"/>
<rect x="236" y="405.0" width="1" height="6.6" fill="#44ff00"/>
<rect x="237" y="405.0" width="1" height="6.6" fill="#44ff00"/>
<rect x="238" y="398.3" width="1" height="13.3" fill="#88ff10"/>
<rect x="238" y="405.0" width="1" height="6.6" fill="#44ff00"/>
<rect x="239" y="398.3" width="1" height="13.3" fill="#88ff10"/>
<rect x="239" y="405.0" width="1" height="6.6" fill="#44ff00"/>
<rect x="240" y="398.3" width="1" height="13.3" fill="#88ff10"/>
<rect x="240" y="405.0" width="1" height="6.6" fill="#44ff00"/>
<rect x="241" y="405.0" width="1" height="6.6" fill="#44ff00"/>
<rect x="242" y="405.0" width="1" height="6.6" fill="#44ff00"/>
<rect x="243" y="398.3" width="1" height="13.3" fill="#88ff10"/>
<rect x="243" y="405.0" width="1" height="6.6" fill="#44ff00"/>
<rect x="244" y="398.3" width="1" height="13.3" fill="#88ff10"/>
<rect x="244" y="405.0" width="1" height="6.6" fill="#44ff00"/>
<rect x="245" y="398.3" width="1" height="13.3" fill="#88ff10"/>
<rect x="245" y="405.0" width="1" height="6.6" fill="#44ff00"/>
<rect x="246" y="405.0" width="1" height="6.6" fill="#44ff00"/>
<rect x="247" y="405.0" width="1" height="6.6" fill="#44ff00"/>
<rect x="248" y="405.0" width="1" height="6.6" fill="#44ff00"/>
<rect x="249" y="398.3" width="1" height="13.3" fill="#88ff10"/>
<rect x="249" y="405.0" width="1" height="6.6" fill="#44ff00"/>
<rect x="250" y="405.0" width="1" height="6.6" fill="#44ff00"/>
<rect x="251" y="398.3" width="1" height="13.3" fill="#88ff10"/>
<rect x="251" y="405.0" width="1" height="6.6" fill="#44ff00"/>
<rect x="252" y="405.0" width="1" height="6.6" fill="#44ff00"/>
<rect x="253" y="405.0" width="1" height="6.6" fill="#44ff00"/>
<rect x="254" y="405.0" width="1" height="6.6" fill="#44ff00"/>
<rect x="255" y="405.0" width="1" height="6.6" fill="#44ff00"/>
<rect x="256" y="405.0" width="1" height="6.6" fill="#44ff00"/>
<rect x="257" y="405.0" width="1" height="6.6" fill="#44ff00"/>
<rect x="258" y="405.0" width="1" height="6.6" fill="#44ff00"/>
<rect x="259" y="405.0" width="1" height="6.6" fill="#44ff00"/>
<rect x="260" y="405.0" width="1" height="6.6" fill="#44ff00"/>
<rect x="261" y="405.0" width="1" height="6.6" fill="#44ff00"/>
<rect x="262" y="405.0" width="1" height="6.6" fill="#44ff00"/>
<rect x="263" y="405.0" width="1" height="6.6" fill="#44ff00"/>
<rect x="264" y="405.0" width="1" height="6.6" fill="#44ff00"/>
<rect x="265" y="405.0" width="1" height="6.6" fill="#44ff00"/>
<rect x="266" y="405.0" width="1" height="6.6" fill="#44ff00"/>
<rect x="267" y="398.3" width="1" height="13.3" fill="#88ff10"/>
<rect x="267" y="405.0" width="1" height="6.6" fill="#44ff00"/>
<rect x="268" y="398.3" width="1" height="13.3" fill="#88ff10"/>
<rect x="268" y="405.0" width="1" height="6.6" fill="#44ff00"/>
<rect x="269" y="398.3" width="1" height="13.3" fill="#88ff10"/>
<rect x="269" y="405.0" width="1" height="6.6" fill="#44ff00"/>
<rect x="270" y="405.0" width="1" height="6.6" fill="#44ff00"/>
<rect x="272" y="405.0" width="1" height="6.6" fill="#44ff00"/>
<rect x="273" y="405.0" width="1" height="6.6" fill="#44ff00"/>
<rect x="274" y="405.0" width="1" height="6.6" fill="#44ff00"/>
<rect x="275" y="405.0" width="1" height="6.6" fill="#44ff00"/>
<rect x="276" y="405.0" width="1" height="6.6" fill="#44ff00"/>
<rect x="277" y="405.0" width="1" height="6.6" fill="#44ff00"/>
<rect x="278" y="405.0" width="1" height="6.6" fill="#44ff00"/>
<rect x="279" y="405.0" width="1" height="6.6" fill="#44ff00"/>
<rect x="280" y="405.0" width="1" height="6.6" fill="#44ff00"/>
<rect x="281" y="405.0" width="1" height="6.6" fill="#44ff00"/>
<rect x="282" y="405.0" width="1" height="6.6" fill="#44ff00"/>
<rect x="283" y="405.0" width="1" height="6.6" fill="#44ff00"/>
<rect x="284" y="405.0" width="1" height="6.6" fill="#44ff00"/>
<rect x="285" y="405.0" width="1" height="6.6" fill="#44ff00"/>
<rect x="286" y="405.0" width="1" height="6.6" fill="#44ff00"/>
<rect x="287" y="405.0" width="1" height="6.6" fill="#44ff00"/>
<rect x="288" y="405.0" width="1" height="6.6" fill="#44ff00"/>
<rect x="289" y="405.0" width="1" height="6.6" fill="#44ff00"/>
<rect x="290" y="405.0" width="1" height="6.6" fill="#44ff00"/>
<rect x="291" y="405.0" width="1" height="6.6" fill="#44ff00"/>
<rect x="292" y="405.0" width="1" height="6.6" fill="#44ff00"/>
<rect x="293" y="405.0" width="1" height="6.6" fill="#44ff00"/>
<rect x="294" y="405.0" width="1" height="6.6" fill="#44ff00"/>
<rect x="295" y="405.0" width="1" height="6.6" fill="#44ff00"/>
<rect x="296" y="405.0" width="1" height="6.6" fill="#44ff00"/>
<rect x="297" y="405.0" width="1" height="6.6" fill="#44ff00"/>
<rect x="298" y="405.0" width="1" height="6.6" fill="#44ff00"/>
<rect x="299" y="405.0" width="1" height="6.6" fill="#44ff00"/>
<rect x="300" y="405.0" width="1" height="6.6" fill="#44ff00"/>
<rect x="301" y="405.0" width="1" height="6.6" fill="#44ff00"/>
<rect x="302" y="405.0" width="1" height="6.6" fill="#44ff00"/>
<rect x="303" y="405.0" width="1" height="6.6" fill="#44ff00"/>
<rect x="304" y="405.0" width="1" height="6.6" fill="#44ff00"/>
<rect x="305" y="405.0" width="1" height="6.6" fill="#44ff00"/>
<rect x="306" y="405.0" width="1" height="6.6" fill="#44ff00"/>
<rect x="307" y="405.0" width="1" height="6.6" fill="#44ff00"/>
<rect x="308" y="405.0" width="1" height="6.6" fill="#44ff00"/>
<rect x="309" y="405.0" width="1" height="6.6" fill="#44ff00"/>
<rect x="310" y="398.3" width="1" height="13.3" fill="#88ff10"/>
<rect x="310" y="405.0" width="1" height="6.6" fill="#44ff00"/>
<rect x="311" y="405.0" width="1" height="6.6" fill="#44ff00"/>
<rect x="312" y="398.3" width="1" height="13.3" fill="#88ff10"/>
<rect x="312" y="405.0" width="1" height="6.6" fill="#44ff00"/>
<rect x="313" y="398.3" width="1" height="13.3" fill="#88ff10"/>
<rect x="313" y="405.0" width="1" height="6.6" fill="#44ff00"/>
<rect x="314" y="405.0" width="1" height="6.6" fill="#44ff00"/>
<rect x="315" y="398.3" width="1" height="13.3" fill="#88ff10"/>
<rect x="315" y="405.0" width="1" height="6.6" fill="#44ff00"/>
<rect x="316" y="398.3" width="1" height="13.3" fill="#88ff10"/>
<rect x="316" y="405.0" width="1" height="6.6" fill="#44ff00"/>
<rect x="317" y="398.3" width="1" height="13.3" fill="#88ff10"/>
<rect x="317" y="405.0" width="1" height="6.6" fill="#44ff00"/>
<rect x="318" y="398.3" width="1" height="13.3" fill="#88ff10"/>
<rect x="318" y="405.0" width="1" height="6.6" fill="#44ff00"/>
<rect x="319" y="398.3" width="1" height="13.3" fill="#88ff10"/>
<rect x="319" y="405.0" width="1" height="6.6" fill="#44ff00"/>
<rect x="320" y="398.3" width="1" height="13.3" fill="#88ff10"/>
<rect x="320" y="405.0" width="1" height="6.6" fill="#44ff00"/>
<rect x="321" y="398.3" width="1" height="13.3" fill="#88ff10"/>
<rect x="321" y="405.0" width="1" height="6.6" fill="#44ff00"/>
<rect x="322" y="398.3" width="1" height="13.3" fill="#88ff10"/>
<rect x="322" y="405.0" width="1" height="6.6" fill="#44ff00"/>
<rect x="323" y="398.3" width="1" height="13.3" fill="#88ff10"/>
<rect x="323" y="405.0" width="1" height="6.6" fill="#44ff00"/>
<rect x="324" y="405.0" width="1" height="6.6" fill="#44ff00"/>
<rect x="325" y="405.0" width="1" height="6.6" fill="#44ff00"/>
<rect x="326" y="405.0" width="1" height="6.6" fill="#44ff00"/>
<rect x="327" y="398.3" width="1" height="13.3" fill="#88ff10"/>
<rect x="327" y="405.0" width="1" height="6.6" fill="#44ff00"/>
<rect x="328" y="405.0" width="1" height="6.6" fill="#44ff00"/>
<rect x="329" y="398.3" width="1" height="13.3" fill="#88ff10"/>
<rect x="329" y="405.0" width="1" height="6.6" fill="#44ff00"/>
<rect x="330" y="398.3" width="1" height="13.3" fill="#88ff10"/>
<rect x="330" y="405.0" width="1" height="6.6" fill="#44ff00"/>
<rect x="331" y="405.0" width="1" height="6.6" fill="#44ff00"/>
<rect x="332" y="398.3" width="1" height="13.3" fill="#88ff10"/>
<rect x="332" y="405.0" width="1" height="6.6" fill="#44ff00"/>
<rect x="333" y="405.0" width="1" height="6.6" fill="#44ff00"/>
<rect x="334" y="398.3" width="1" height="13.3" fill="#88ff10"/>
<rect x="334" y="405.0" width="1" height="6.6" fill="#44ff00"/>
<rect x="335" y="405.0" width="1" height="6.6" fill="#44ff00"/>
<rect x="336" y="398.3" width="1" height="13.3" fill="#88ff10"/>
<rect x="336" y="405.0" width="1" height="6.6" fill="#44ff00"/>
<rect x="337" y="405.0" width="1" height="6.6" fill="#44ff00"/>
<rect x="338" y="398.3" width="1" height="13.3" fill="#88ff10"/>
<rect x="338" y="405.0" width="1" height="6.6" fill="#44ff00"/>
<rect x="339" y="398.3" width="1" height="13.3" fill="#88ff10"/>
<rect x="339" y="405.0" width="1" height="6.6" fill="#44ff00"/>
<rect x="340" y="405.0" width="1" height="6.6" fill="#44ff00"/>
<rect x="341" y="405.0" width="1" height="6.6" fill="#44ff00"/>
<rect x="342" y="405.0" width="1" height="6.6" fill="#44ff00"/>
<rect x="343" y="405.0" width="1" height="6.6" fill="#44ff00"/>
<rect x="344" y="398.3" width="1" height="13.3" fill="#88ff10"/>
<rect x="344" y="405.0" width="1" height="6.6" fill="#44ff00"/>
<rect x="345" y="391.7" width="1" height="19.9" fill="#b4ff00"/>
<rect x="345" y="398.3" width="1" height="13.3" fill="#88ff10"/>
<rect x="345" y="405.0" width="1" height="6.6" fill="#44ff00"/>
<rect x="346" y="398.3" width="1" height="13.3" fill="#88ff10"/>
<rect x="346" y="405.0" width="1" height="6.6" fill="#44ff00"/>
<rect x="347" y="398.3" width="1" height="13.3" fill="#88ff10"/>
<rect x="347" y="405.0" width="1" height="6.6" fill="#44ff00"/>
<rect x="348" y="398.3" width="1" height="13.3" fill="#88ff10"/>
<rect x="348" y="405.0" width="1" height="6.6" fill="#44ff00"/>
<rect x="349" y="398.3" width="1" height="13.3" fill="#88ff10"/>
<rect x="350" y="398.3" width="1" height="13.3" fill="#88ff10"/>
<rect x="350" y="405.0" width="1" height="6.6" fill="#44ff00"/>
<rect x="351" y="391.7" width="1" height="19.9" fill="#b4ff00"/>
<rect x="351" y="398.3" width="1" height="13.3" fill="#88ff10"/>
<rect x="351" y="405.0" width="1" height="6.6" fill="#44ff00"/>
<rect x="352" y="398.3" width="1" height="13.3" fill="#88ff10"/>
<rect x="353" y="398.3" width="1" height="13.3" fill="#88ff10"/>
<rect x="353" y="405.0" width="1" height="6.6" fill="#44ff00"/>
<rect x="354" y="398.3" width="1" height="13.3" fill="#88ff10"/>
<rect x="354" y="405.0" width="1" height="6.6" fill="#44ff00"/>
<rect x="355" y="398.3" width="1" height="13.3" fill="#88ff10"/>
<rect x="355" y="405.0" width="1" height="6.6" fill="#44ff00"/>
<rect x="356" y="391.7" width="1" height="19.9" fill="#b4ff00"/>
<rect x="356" y="398.3" width="1" height="13.3" fill="#88ff10"/>
<rect x="357" y="391.7" width="1" height="19.9" fill="#b4ff00"/>
<rect x="357" y="398.3" width="1" height="13.3" fill="#88ff10"/>
<rect x="358" y="398.3" width="1" height="13.3" fill="#88ff10"/>
<rect x="358" y="405.0" width="1" height="6.6" fill="#44ff00"/>
<rect x="359" y="398.3" width="1" height="13.3" fill="#88ff10"/>
<rect x="359" y="405.0" width="1" height="6.6" fill="#44ff00"/>
<rect x="360" y="398.3" width="1" height="13.3" fill="#88ff10"/>
<rect x="360" y="405.0" width="1" height="6.6" fill="#44ff00"/>
<rect x="361" y="398.3" width="1" height="13.3" fill="#88ff10"/>
<rect x="361" y="405.0" width="1" height="6.6" fill="#44ff00"/>
<rect x="362" y="391.7" width="1" height="19.9" fill="#b4ff00"/>
<rect x="362" y="398.3" width="1" height="13.3" fill="#88ff10"/>
<rect x="363" y="391.7" width="1" height="19.9" fill="#b4ff00"/>
<rect x="363" y="398.3" width="1" height="13.3" fill="#88ff10"/>
<rect x="364" y="378.4" width="1" height="33.2" fill="#ffd800"/>
<rect x="364" y="391.7" width="1" height="19.9" fill="#b4ff00"/>
<rect x="364" y="398.3" width="1" height="13.3" fill="#88ff10"/>
<rect x="364" y="405.0" width="1" height="6.6" fill="#44ff00"/>
<rect x="365" y="391.7" width="1" height="19.9" fill="#b4ff00"/>
<rect x="365" y="398.3" width="1" height="13.3" fill="#88ff10"/>
<rect x="365" y="405.0" width="1" height="6.6" fill="#44ff00"/>
<rect x="366" y="398.3" width="1" height="13.3" fill="#88ff10"/>
<rect x="366" y="405.0" width="1" height="6.6" fill="#44ff00"/>
<rect x="367" y="391.7" width="1" height="19.9" fill="#b4ff00"/>
<rect x="367" y="398.3" width="1" height="13.3" fill="#88ff10"/>
<rect x="367" y="405.0" width="1" height="6.6" fill="#44ff00"/>
<rect x="368" y="398.3" width="1" height="13.3" fill="#88ff10"/>
<rect x="369" y="398.3" width="1" height="13.3" fill="#88ff10"/>
<rect x="370" y="385.0" width="1" height="26.6" fill="#ffff00"/>
<rect x="370" y="391.7" width="1" height="19.9" fill="#b4ff00"/>
<rect x="370" y="398.3" width="1" height="13.3" fill="#88ff10"/>
<rect x="370" y="405.0" width="1" height="6.6" fill="#44ff00"/>
<rect x="371" y="398.3" width="1" height="13.3" fill="#88ff10"/>
<rect x="372" y="398.3" width="1" height="13.3" fill="#88ff10"/>
<rect x="372" y="405.0" width="1" height="6.6" fill="#44ff00"/>
<rect x="373" y="391.7" width="1" height="19.9" fill="#b4ff00"/>
<rect x="373" y="398.3" width="1" height="13.3" fill="#88ff10"/>
<rect x="373" y="405.0" width="1" height="6.6" fill="#44ff00"/>
<rect x="374" y="391.7" width="1" height="19.9" fill="#b4ff00"/>
<rect x="374" y="398.3" width="1" height="13.3" fill="#88ff10"/>
<rect x="374" y="405.0" width="1" height="6.6" fill="#44ff00"/>
<rect x="375" y="398.3" width="1" height="13.3" fill="#88ff10"/>
<rect x="375" y="405.0" width="1" height="6.6" fill="#44ff00"/>
<rect x="376" y="385.0" width="1" height="26.6" fill="#ffff00"/>
<rect x="376" y="391.7" width="1" height="19.9" fill="#b4ff00"/>
<rect x="376" y="398.3" width="1" height="13.3" fill="#88ff10"/>
<rect x="377" y="391.7" width="1" height="19.9" fill="#b4ff00"/>
<rect x="377" y="398.3" width="1" height="13.3" fill="#88ff10"/>
<rect x="377" y="405.0" width="1" height="6.6" fill="#44ff00"/>
<rect x="378" y="391.7" width="1" height="19.9" fill="#b4ff00"/>
<rect x="378" y="405.0" width="1" height="6.6" fill="#44ff00"/>
<rect x="379" y="378.4" width="1" height="33.2" fill="#ffd800"/>
<rect x="379" y="385.0" width="1" height="26.6" fill="#ffff00"/>
<rect x="380" y="378.4" width="1" height="33.2" fill="#ffd800"/>
<rect x="380" y="385.0" width="1" height="26.6" fill="#ffff00"/>
<rect x="380" y="405.0" width="1" height="6.6" fill="#44ff00"/>
<rect x="381" y="385.0" width="1" height="26.6" fill="#ffff00"/>
<rect x="381" y="391.7" width="1" height="19.9" fill="#b4ff00"/>
<rect x="381" y="398.3" width="1" height="13.3" fill="#88ff10"/>
<rect x="381" y="405.0" width="1" height="6.6" fill="#44ff00"/>
<rect x="382" y="371.7" width="1" height="39.9" fill="#ffaa00"/>
<rect x="382" y="385.0" width="1" height="26.6" fill="#ffff00"/>
<rect x="382" y="398.3" width="1" height="13.3" fill="#88ff10"/>
<rect x="382" y="405.0" width="1" height="6.6" fill="#44ff00"/>
<rect x="383" y="378.4" width="1" height="33.2" fill="#ffd800"/>
<rect x="383" y="391.7" width="1" height="19.9" fill="#b4ff00"/>
<rect x="383" y="398.3" width="1" height="13.3" fill="#88ff10"/>
<rect x="383" y="405.0" width="1" height="6.6" fill="#44ff00"/>
<rect x="384" y="391.7" width="1" height="19.9" fill="#b4ff00"/>
<rect x="384" y="405.0" width="1" height="6.6" fill="#44ff00"/>
<rect x="385" y="391.7" width="1" height="19.9" fill="#b4ff00"/>
<rect x="385" y="398.3" width="1" height="13.3" fill="#88ff10"/>
<rect x="385" y="405.0" width="1" height="6.6" fill="#44ff00"/>
<rect x="386" y="385.0" width="1" height="26.6" fill="#ffff00"/>
<rect x="386" y="391.7" width="1" height="19.9" fill="#b4ff00"/>
<rect x="386" y="398.3" width="1" height="13.3" fill="#88ff10"/>
<rect x="386" y="405.0" width="1" height="6.6" fill="#44ff00"/>
<rect x="387" y="385.0" width="1" height="26.6" fill="#ffff00"/>
<rect x="387" y="391.7" width="1" height="19.9" fill="#b4ff00"/>
<rect x="387" y="398.3" width="1" height="13.3" fill="#88ff10"/>
<rect x="388" y="385.0" width="1" height="26.6" fill="#ffff00"/>
<rect x="388" y="391.7" width="1" height="19.9" fill="#b4ff00"/>
<rect x="388" y="398.3" width="1" height="13.3" fill="#88ff10"/>
<rect x="388" y="405.0" width="1" height="6.6" fill="#44ff00"/>
<rect x="389" y="385.0" width="1" height="26.6" fill="#ffff00"/>
<rect x="389" y="391.7" width="1" height="19.9" fill="#b4ff00"/>
<rect x="389" y="405.0" width="1" height="6.6" fill="#44ff00"/>
<rect x="390" y="378.4" width="1" height="33.2" fill="#ffd800"/>
<rect x="390" y="385.0" width="1" height="26.6" fill="#ffff00"/>
<rect x="390" y="391.7" width="1" height="19.9" fill="#b4ff00"/>
<rect x="390" y="405.0" width="1" height="6.6" fill="#44ff00"/>
<rect x="391" y="378.4" width="1" height="33.2" fill="#ffd800"/>
<rect x="391" y="385.0" width="1" height="26.6" fill="#ffff00"/>
<rect x="391" y="391.7" width="1" height="19.9" fill="#b4ff00"/>
<rect x="391" y="398.3" width="1" height="13.3" fill="#88ff10"/>
<rect x="391" y="405.0" width="1" height="6.6" fill="#44ff00"/>
<rect x="392" y="391.7" width="1" height="19.9" fill="#b4ff00"/>
<rect x="393" y="385.0" width="1" height="26.6" fill="#ffff00"/>
<rect x="393" y="391.7" width="1" height="19.9" fill="#b4ff00"/>
<rect x="393" y="405.0" width="1" height="6.6" fill="#44ff00"/>
<rect x="394" y="385.0" width="1" height="26.6" fill="#ffff00"/>
<rect x="394" y="391.7" width="1" height="19.9" fill="#b4ff00"/>
<rect x="395" y="385.0" width="1" height="26.6" fill="#ffff00"/>
<rect x="395" y="391.7" width="1" height="19.9" fill="#b4ff00"/>
<rect x="395" y="398.3" width="1" height="13.3" fill="#88ff10"/>
<rect x="395" y="405.0" width="1" height="6.6" fill="#44ff00"/>
<rect x="396" y="378.4" width="1" height="33.2" fill="#ffd800"/>
<rect x="396" y="385.0" width="1" height="26.6" fill="#ffff00"/>
<rect x="396" y="398.3" width="1" height="13.3" fill="#88ff10"/>
<rect x="397" y="385.0" width="1" height="26.6" fill="#ffff00"/>
<rect x="397" y="391.7" width="1" height="19.9" fill="#b4ff00"/>
<rect x="397" y="405.0" width="1" height="6.6" fill="#44ff00"/>
<rect x="398" y="385.0" width="1" height="26.6" fill="#ffff00"/>
<rect x="398" y="391.7" width="1" height="19.9" fill="#b4ff00"/>
<rect x="398" y="398.3" width="1" height="13.3" fill="#88ff10"/>
<rect x="398" y="405.0" width="1" height="6.6" fill="#44ff00"/>
<rect x="399" y="378.4" width="1" height="33.2" fill="#ffd800"/>
<rect x="399" y="385.0" width="1" height="26.6" fill="#ffff00"/>
<rect x="399" y="391.7" width="1" height="19.9" fill="#b4ff00"/>
<rect x="399" y="398.3" width="1" height="13.3" fill="#88ff10"/>
<rect x="399" y="405.0" width="1" height="6.6" fill="#44ff00"/>
<rect x="400" y="378.4" width="1" height="33.2" fill="#ffd800"/>
<rect x="400" y="385.0" width="1" height="26.6" fill="#ffff00"/>
<rect x="400" y="391.7" width="1" height="19.9" fill="#b4ff00"/>
<rect x="400" y="398.3" width="1" height="13.3" fill="#88ff10"/>
<rect x="400" y="405.0" width="1" height="6.6" fill="#44ff00"/>
<rect x="401" y="385.0" width="1" height="26.6" fill="#ffff00"/>
<rect x="401" y="391.7" width="1" height="19.9" fill="#b4ff00"/>
<rect x="401" y="398.3" width="1" height="13.3" fill="#88ff10"/>
<rect x="401" y="405.0" width="1" height="6.6" fill="#44ff00"/>
<rect x="402" y="385.0" width="1" height="26.6" fill="#ffff00"/>
<rect x="402" y="391.7" width="1" height="19.9" fill="#b4ff00"/>
<rect x="402" y="398.3" width="1" height="13.3" fill="#88ff10"/>
<rect x="402" y="405.0" width="1" height="6.6" fill="#44ff00"/>
<rect x="403" y="371.7" width="1" height="39.9" fill="#ffaa00"/>
<rect x="403" y="378.4" width="1" height="33.2" fill="#ffd800"/>
<rect x="403" y="385.0" width="1" height="26.6" fill="#ffff00"/>
<rect x="404" y="358.4" width="1" height="53.2" fill="#ff4a00"/>
<rect x="404" y="371.7" width="1" height="39.9" fill="#ffaa00"/>
<rect x="404" y="378.4" width="1" height="33.2" fill="#ffd800"/>
<rect x="405" y="365.1" width="1" height="46.6" fill="#ff7000"/>
<rect x="405" y="371.7" width="1" height="39.9" fill="#ffaa00"/>
<rect x="405" y="378.4" width="1" height="33.2" fill="#ffd800"/>
<rect x="405" y="405.0" width="1" height="6.6" fill="#44ff00"/>
<rect x="406" y="371.7" width="1" height="39.9" fill="#ffaa00"/>
<rect x="406" y="378.4" width="1" height="33.2" fill="#ffd800"/>
<rect x="406" y="398.3" width="1" height="13.3" fill="#88ff10"/>
<rect x="406" y="405.0" width="1" height="6.6" fill="#44ff00"/>
<rect x="407" y="345.1" width="1" height="66.5" fill="#ff2a00"/>
<rect x="407" y="371.7" width="1" height="39.9" fill="#ffaa00"/>
<rect x="407" y="378.4" width="1" height="33.2" fill="#ffd800"/>
<rect x="407" y="405.0" width="1" height="6.6" fill="#44ff00"/>
<rect x="408" y="371.7" width="1" height="39.9" fill="#ffaa00"/>
<rect x="408" y="378.4" width="1" height="33.2" fill="#ffd800"/>
<rect x="408" y="385.0" width="1" height="26.6" fill="#ffff00"/>
<rect x="408" y="398.3" width="1" height="13.3" fill="#88ff10"/>
<rect x="409" y="391.7" width="1" height="19.9" fill="#b4ff00"/>
<rect x="409" y="398.3" width="1" height="13.3" fill="#88ff10"/>
<rect x="409" y="405.0" width="1" height="6.6" fill="#44ff00"/>
<rect x="410" y="398.3" width="1" height="13.3" fill="#88ff10"/>
<rect x="410" y="405.0" width="1" height="6.6" fill="#44ff00"/>
<rect x="411" y="391.7" width="1" height="19.9" fill="#b4ff00"/>
<rect x="411" y="398.3" width="1" height="13.3" fill="#88ff10"/>
<rect x="412" y="398.3" width="1" height="13.3" fill="#88ff10"/>
<rect x="413" y="391.7" width="1" height="19.9" fill="#b4ff00"/>
<rect x="413" y="398.3" width="1" height="13.3" fill="#88ff10"/>
<rect x="413" y="405.0" width="1" height="6.6" fill="#44ff00"/>
<rect x="414" y="378.4" width="1" height="33.2" fill="#ffd800"/>
<rect x="414" y="385.0" width="1" height="26.6" fill="#ffff00"/>
<rect x="414" y="391.7" width="1" height="19.9" fill="#b4ff00"/>
<rect x="414" y="398.3" width="1" height="13.3" fill="#88ff10"/>
<rect x="414" y="405.0" width="1" height="6.6" fill="#44ff00"/>
<rect x="415" y="378.4" width="1" height="33.2" fill="#ffd800"/>
<rect x="415" y="385.0" width="1" height="26.6" fill="#ffff00"/>
<rect x="415" y="391.7" width="1" height="19.9" fill="#b4ff00"/>
<rect x="415" y="405.0" width="1" height="6.6" fill="#44ff00"/>
<rect x="416" y="378.4" width="1" height="33.2" fill="#ffd800"/>
<rect x="416" y="385.0" width="1" height="26.6" fill="#ffff00"/>
<rect x="416" y="391.7" width="1" height="19.9" fill="#b4ff00"/>
<rect x="416" y="398.3" width="1" height="13.3" fill="#88ff10"/>
<rect x="416" y="405.0" width="1" height="6.6" fill="#44ff00"/>
<rect x="417" y="385.0" width="1" height="26.6" fill="#ffff00"/>
<rect x="417" y="391.7" width="1" height="19.9" fill="#b4ff00"/>
<rect x="417" y="405.0" width="1" height="6.6" fill="#44ff00"/>
<rect x="418" y="365.1" width="1" height="46.6" fill="#ff7000"/>
<rect x="418" y="385.0" width="1" height="26.6" fill="#ffff00"/>
<rect x="418" y="398.3" width="1" height="13.3" fill="#88ff10"/>
<rect x="418" y="405.0" width="1" height="6.6" fill="#44ff00"/>
<rect x="419" y="378.4" width="1" height="33.2" fill="#ffd800"/>
<rect x="419" y="385.0" width="1" height="26.6" fill="#ffff00"/>
<rect x="419" y="398.3" width="1" height="13.3" fill="#88ff10"/>
<rect x="419" y="405.0" width="1" height="6.6" fill="#44ff00"/>
<rect x="420" y="378.4" width="1" height="33.2" fill="#ffd800"/>
<rect x="420" y="385.0" width="1" height="26.6" fill="#ffff00"/>
<rect x="420" y="391.7" width="1" height="19.9" fill="#b4ff00"/>
<rect x="421" y="385.0" width="1" height="26.6" fill="#ffff00"/>
<rect x="421" y="391.7" width="1" height="19.9" fill="#b4ff00"/>
<rect x="421" y="398.3" width="1" height="13.3" fill="#88ff10"/>
<rect x="421" y="405.0" width="1" height="6.6" fill="#44ff00"/>
<rect x="422" y="378.4" width="1" height="33.2" fill="#ffd800"/>
<rect x="422" y="385.0" width="1" height="26.6" fill="#ffff00"/>
<rect x="422" y="391.7" width="1" height="19.9" fill="#b4ff00"/>
<rect x="423" y="378.4" width="1" height="33.2" fill="#ffd800"/>
<rect x="423" y="391.7" width="1" height="19.9" fill="#b4ff00"/>
<rect x="423" y="398.3" width="1" height="13.3" fill="#88ff10"/>
<rect x="423" y="405.0" width="1" height="6.6" fill="#44ff00"/>
<rect x="424" y="378.4" width="1" height="33.2" fill="#ffd800"/>
<rect x="424" y="391.7" width="1" height="19.9" fill="#b4ff00"/>
<rect x="424" y="405.0" width="1" height="6.6" fill="#44ff00"/>
<rect x="425" y="378.4" width="1" height="33.2" fill="#ffd800"/>
<rect x="425" y="391.7" width="1" height="19.9" fill="#b4ff00"/>
<rect x="425" y="398.3" width="1" height="13.3" fill="#88ff10"/>
<rect x="425" y="405.0" width="1" height="6.6" fill="#44ff00"/>
<rect x="426" y="391.7" width="1" height="19.9" fill="#b4ff00"/>
<rect x="426" y="405.0" width="1" height="6.6" fill="#44ff00"/>
<rect x="427" y="385.0" width="1" height="26.6" fill="#ffff00"/>
<rect x="427" y="391.7" width="1" height="19.9" fill="#b4ff00"/>
<rect x="427" y="405.0" width="1" height="6.6" fill="#44ff00"/>
<rect x="428" y="391.7" width="1" height="19.9" fill="#b4ff00"/>
<rect x="428" y="398.3" width="1" height="13.3" fill="#88ff10"/>
<rect x="428" y="405.0" width="1" height="6.6" fill="#44ff00"/>
<rect x="429" y="391.7" width="1" height="19.9" fill="#b4ff00"/>
<rect x="429" y="398.3" width="1" height="13.3" fill="#88ff10"/>
<rect x="429" y="405.0" width="1" height="6.6" fill="#44ff00"/>
<rect x="430" y="391.7" width="1" height="19.9" fill="#b4ff00"/>
<rect x="430" y="398.3" width="1" height="13.3" fill="#88ff10"/>
<rect x="430" y="405.0" width="1" height="6.6" fill="#44ff00"/>
<rect x="431" y="385.0" width="1" height="26.6" fill="#ffff00"/>
<rect x="431" y="391.7" width="1" height="19.9" fill="#b4ff00"/>
<rect x="431" y="398.3" width="1" height="13.3" fill="#88ff10"/>
<rect x="431" y="405.0" width="1" height="6.6" fill="#44ff00"/>
<rect x="432" y="391.7" width="1" height="19.9" fill="#b4ff00"/>
<rect x="432" y="398.3" width="1" height="13.3" fill="#88ff10"/>
<rect x="432" y="405.0" width="1" height="6.6" fill="#44ff00"/>
<rect x="433" y="398.3" width="1" height="13.3" fill="#88ff10"/>
<rect x="433" y="405.0" width="1" height="6.6" fill="#44ff00"/>
<rect x="434" y="391.7" width="1" height="19.9" fill="#b4ff00"/>
<rect x="434" y="398.3" width="1" height="13.3" fill="#88ff10"/>
<rect x="434" y="405.0" width="1" height="6.6" fill="#44ff00"/>
<rect x="435" y="398.3" width="1" height="13.3" fill="#88ff10"/>
<rect x="435" y="405.0" width="1" height="6.6" fill="#44ff00"/>
<rect x="436" y="398.3" width="1" height="13.3" fill="#88ff10"/>
<rect x="437" y="398.3" width="1" height="13.3" fill="#88ff10"/>
<rect x="437" y="405.0" width="1" height="6.6" fill="#44ff00"/>
<rect x="438" y="398.3" width="1" height="13.3" fill="#88ff10"/>
<rect x="438" y="405.0" width="1" height="6.6" fill="#44ff00"/>
<rect x="439" y="405.0" width="1" height="6.6" fill="#44ff00"/>
<rect x="440" y="405.0" width="1" height="6.6" fill="#44ff00"/>
<rect x="441" y="405.0" width="1" height="6.6" fill="#44ff00"/>
<rect x="442" y="398.3" width="1" height="13.3" fill="#88ff10"/>
<rect x="442" y="405.0" width="1" height="6.6" fill="#44ff00"/>
<rect x="443" y="398.3" width="1" height="13.3" fill="#88ff10"/>
<rect x="443" y="405.0" width="1" height="6.6" fill="#44ff00"/>
<rect x="444" y="115" width="1" height="135" fill="#e0e0e0"/>
<rect x="444" y="277" width="1" height="135" fill="#e0e0e0"/>
<line x1="45.5" y1="249.50" x2="49" y2="249.50" stroke="#1212a0"/>
<line x1="45.5" y1="222.90" x2="49" y2="222.90" stroke="#1212a0"/>
<line x1="45.5" y1="196.30" x2="49" y2="196.30" stroke="#1212a0"/>
<line x1="45.5" y1="169.70" x2="49" y2="169.70" stroke="#1212a0"/>
<line x1="45.5" y1="143.10" x2="49" y2="143.10" stroke="#1212a0"/>
<line x1="45.5" y1="116.50" x2="49" y2="116.50" stroke="#1212a0"/>
<line x1="45.5" y1="411.60" x2="49" y2="411.60" stroke="#1212a0"/>
<line x1="45.5" y1="385.00" x2="49" y2="385.00" stroke="#1212a0"/>
<line x1="45.5" y1="358.40" x2="49" y2="358.40" stroke="#1212a0"/>
<line x1="45.5" y1="331.80" x2="49" y2="331.80" stroke="#1212a0"/>
<line x1="45.5" y1="305.20" x2="49" y2="305.20" stroke="#1212a0"/>
<line x1="45.5" y1="278.60" x2="49" y2="278.60" stroke="#1212a0"/>
<line x1="467" y1="249.50" x2="471" y2="249.50" stroke="#1212a0"/>
<line x1="467" y1="232.88" x2="471" y2="232.88" stroke="#1212a0"/>
<line x1="467" y1="216.25" x2="471" y2="216.25" stroke="#1212a0"/>
<line x1="467" y1="199.62" x2="471" y2="199.62" stroke="#1212a0"/>
<line x1="467" y1="183.00" x2="471" y2="183.00" stroke="#1212a0"/>
<line x1="467" y1="166.38" x2="471" y2="166.38" stroke="#1212a0"/>
<line x1="467" y1="149.75" x2="471" y2="149.75" stroke="#1212a0"/>
<line x1="467" y1="133.12" x2="471" y2="133.12" stroke="#1212a0"/>
<line x1="467" y1="116.50" x2="471" y2="116.50" stroke="#1212a0"/>
</svg>
<div class="t" style="left:-58.2px;width:100px;text-align:right;top:216.19px;font-size:11px;line-height:11px;color:#000">100</div>
<div class="t" style="left:-58.2px;width:100px;text-align:right;top:189.59px;font-size:11px;line-height:11px;color:#000">200</div>
<div class="t" style="left:-58.2px;width:100px;text-align:right;top:162.99px;font-size:11px;line-height:11px;color:#000">300</div>
<div class="t" style="left:-58.2px;width:100px;text-align:right;top:136.39px;font-size:11px;line-height:11px;color:#000">400</div>
<div class="t" style="left:-58.2px;width:100px;text-align:right;top:109.79px;font-size:11px;line-height:11px;color:#000">500</div>
<div class="t" style="left:471.2px;top:226.16px;font-size:11px;line-height:11px;color:#000">2</div>
<div class="t" style="left:471.2px;top:209.54px;font-size:11px;line-height:11px;color:#000">4</div>
<div class="t" style="left:471.2px;top:192.91px;font-size:11px;line-height:11px;color:#000">6</div>
<div class="t" style="left:471.2px;top:176.29px;font-size:11px;line-height:11px;color:#000">8</div>
<div class="t" style="left:471.2px;top:159.66px;font-size:11px;line-height:11px;color:#000">10</div>
<div class="t" style="left:471.2px;top:143.04px;font-size:11px;line-height:11px;color:#000">12</div>
<div class="t" style="left:471.2px;top:126.41px;font-size:11px;line-height:11px;color:#000">14</div>
<div class="t" style="left:471.2px;top:109.79px;font-size:11px;line-height:11px;color:#000">16</div>
<div class="t" style="left:-58.2px;width:100px;text-align:right;top:378.29px;font-size:11px;line-height:11px;color:#000">4</div>
<div class="t" style="left:-58.2px;width:100px;text-align:right;top:351.69px;font-size:11px;line-height:11px;color:#000">8</div>
<div class="t" style="left:-58.2px;width:100px;text-align:right;top:325.09px;font-size:11px;line-height:11px;color:#000">12</div>
<div class="t" style="left:-58.2px;width:100px;text-align:right;top:298.49px;font-size:11px;line-height:11px;color:#000">16</div>
<div class="t" style="left:-58.2px;width:100px;text-align:right;top:271.89px;font-size:11px;line-height:11px;color:#000">20</div>
<div class="t" style="left:471.2px;top:378.29px;font-size:11px;line-height:11px;color:#000">2</div>
<div class="t" style="left:471.2px;top:351.69px;font-size:11px;line-height:11px;color:#000">4</div>
<div class="t" style="left:471.2px;top:325.09px;font-size:11px;line-height:11px;color:#000">6</div>
<div class="t" style="left:471.2px;top:298.49px;font-size:11px;line-height:11px;color:#000">8</div>
<div class="t" style="left:471.2px;top:271.89px;font-size:11px;line-height:11px;color:#000">10</div>
<div class="t" style="left:-0.36999999999999744px;width:100px;text-align:center;top:253.59px;font-size:11px;line-height:11px;color:#000">0.0</div>
<div class="t" style="left:-0.36999999999999744px;width:100px;text-align:center;top:415.69px;font-size:11px;line-height:11px;color:#000">0.0</div>
<div class="t" style="left:46.2px;width:100px;text-align:center;top:253.59px;font-size:11px;line-height:11px;color:#000">0.5</div>
<div class="t" style="left:46.2px;width:100px;text-align:center;top:415.69px;font-size:11px;line-height:11px;color:#000">0.5</div>
<div class="t" style="left:92.76999999999998px;width:100px;text-align:center;top:253.59px;font-size:11px;line-height:11px;color:#000">1.0</div>
<div class="t" style="left:92.76999999999998px;width:100px;text-align:center;top:415.69px;font-size:11px;line-height:11px;color:#000">1.0</div>
<div class="t" style="left:139.34px;width:100px;text-align:center;top:253.59px;font-size:11px;line-height:11px;color:#000">1.5</div>
<div class="t" style="left:139.34px;width:100px;text-align:center;top:415.69px;font-size:11px;line-height:11px;color:#000">1.5</div>
<div class="t" style="left:185.91px;width:100px;text-align:center;top:253.59px;font-size:11px;line-height:11px;color:#000">2.0</div>
<div class="t" style="left:185.91px;width:100px;text-align:center;top:415.69px;font-size:11px;line-height:11px;color:#000">2.0</div>
<div class="t" style="left:232.47999999999996px;width:100px;text-align:center;top:253.59px;font-size:11px;line-height:11px;color:#000">2.5</div>
<div class="t" style="left:232.47999999999996px;width:100px;text-align:center;top:415.69px;font-size:11px;line-height:11px;color:#000">2.5</div>
<div class="t" style="left:279.05px;width:100px;text-align:center;top:253.59px;font-size:11px;line-height:11px;color:#000">3.0</div>
<div class="t" style="left:279.05px;width:100px;text-align:center;top:415.69px;font-size:11px;line-height:11px;color:#000">3.0</div>
<div class="t" style="left:325.62px;width:100px;text-align:center;top:253.59px;font-size:11px;line-height:11px;color:#000">3.5</div>
<div class="t" style="left:325.62px;width:100px;text-align:center;top:415.69px;font-size:11px;line-height:11px;color:#000">3.5</div>
<div class="t" style="left:372.19px;width:100px;text-align:center;top:253.59px;font-size:11px;line-height:11px;color:#000">4.0</div>
<div class="t" style="left:372.19px;width:100px;text-align:center;top:415.69px;font-size:11px;line-height:11px;color:#000">4.0</div>
<div class="t" style="left:418.76px;width:100px;text-align:center;top:253.59px;font-size:11px;line-height:11px;color:#000">4.5</div>
<div class="t" style="left:418.76px;width:100px;text-align:center;top:415.69px;font-size:11px;line-height:11px;color:#000">4.5</div>
<div class="a" style="left:492px;top:109px;width:140px;height:84px;box-sizing:border-box;border:1px solid #d5dfe5;border-radius:3px;box-shadow: inset 0 0 0 1px #fff;"></div>
<div class="a" style="left:498px;top:104px;width:47px;height:12px;background:#fff;"></div>
<div class="t" style="left:501px;top:105.31px;font-size:10.5px;line-height:10.5px;color:#000;">Disk-Info</div>
<div class="t" style="left:501px;top:120.01px;font-size:10.5px;line-height:10.5px;color:#000;">Typ:</div>
<div class="t" style="left:546.4px;top:120.01px;font-size:10.5px;line-height:10.5px;color:#1d1d6b;">DVD-R</div>
<div class="t" style="left:501px;top:137.61px;font-size:10.5px;line-height:10.5px;color:#000;">ID:</div>
<div class="t" style="left:546.4px;top:137.61px;font-size:10.5px;line-height:10.5px;color:#1d1d6b;">MCC 03RG20</div>
<div class="t" style="left:501px;top:155.21px;font-size:10.5px;line-height:10.5px;color:#000;">Datum:</div>
<div class="t" style="left:546.4px;top:155.21px;font-size:10.5px;line-height:10.5px;color:#1d1d6b;">11 Aug 2009</div>
<div class="t" style="left:501px;top:172.81px;font-size:10.5px;line-height:10.5px;color:#000;">Label:</div>
<div class="t" style="left:546.4px;top:172.81px;font-size:10.5px;line-height:10.5px;color:#1d1d6b;letter-spacing:0.42px;">THE_FOUNTAIN</div>
<div class="a" style="left:627px;top:170px;width:4px;height:16px;background:#fff;"></div>
<div class="a" style="left:492px;top:200px;width:140px;height:204px;box-sizing:border-box;border:1px solid #d5dfe5;border-radius:3px;box-shadow: inset 0 0 0 1px #fff;"></div>
<div class="a" style="left:498px;top:195px;width:69px;height:12px;background:#fff;"></div>
<div class="t" style="left:501px;top:196.31px;font-size:10.5px;line-height:10.5px;color:#000;">Einstellungen</div>
<div class="a" style="left:501px;top:211px;width:84px;height:20px;box-sizing:border-box;border:1px solid #707070;border-radius:3px;background:linear-gradient(#f2f2f2 0%,#ebebeb 48%,#dddddd 52%,#cfcfcf 100%);box-shadow: inset 0 0 0 1px rgba(255,255,255,0.85);"></div>
<div class="t" style="left:504.7px;top:215.41px;font-size:10.5px;line-height:10.5px;color:#000;">4 X</div>
<svg class="a" style="left:572px;top:218px" width="10" height="6"><path d="M0.5 0.5 L8.5 0.5 L4.5 4.5 Z" fill="#000"/></svg>
<div class="a" style="left:594px;top:211px;width:21px;height:20px;box-sizing:border-box;border:1px solid #707070;border-radius:3px;background:linear-gradient(#f2f2f2 0%,#ebebeb 48%,#dddddd 52%,#cfcfcf 100%);box-shadow: inset 0 0 0 1px rgba(255,255,255,0.85);"></div>
<svg class="a" style="left:597px;top:212px" width="15" height="17"><rect x="0.5" y="0.5" width="13.5" height="15.5" fill="#fff" stroke="#000" stroke-width="1.2"/><path d="M3.3 8 L3.5 5 Q4 4.2 5 4.2 L7.5 4.2" stroke="#1a7a1a" stroke-width="1.4" fill="none"/><path d="M7 2 L9.5 4.2 L7 6.6 Z" fill="#1a7a1a"/><path d="M11 8.4 L10.8 10.6 Q10.5 11.2 9.6 11.2 L7 11.2" stroke="#1a7a1a" stroke-width="1.4" fill="none"/><path d="M7.6 8.8 L5 11.2 L7.6 13.6 Z" fill="#1a7a1a"/></svg>
<div class="t" style="left:503.4px;top:241.91px;font-size:10.5px;line-height:10.5px;color:#000;">Start:</div>
<div class="t" style="left:503.4px;top:264.91px;font-size:10.5px;line-height:10.5px;color:#000;">Ende:</div>
<div class="a" style="left:555px;top:236px;width:60px;height:20px;box-sizing:border-box;border:1px solid #dbdfe6;border-top-color:#abadb3;border-radius:2px;background:#fff;"></div>
<div class="a" style="left:555px;top:259px;width:60px;height:20px;box-sizing:border-box;border:1px solid #dbdfe6;border-top-color:#abadb3;border-radius:2px;background:#fff;"></div>
<div class="t" style="left:558.5px;top:241.21px;font-size:10.5px;line-height:10.5px;color:#000;">0000 MB</div>
<div class="t" style="left:558.5px;top:264.01px;font-size:10.5px;line-height:10.5px;color:#000;">4356 MB</div>
<div class="a" style="left:503px;top:281px;width:13px;height:13px;box-sizing:border-box;border:1px solid #8f8f8f;background:linear-gradient(135deg,#d4d4d4 0%,#eeeeee 60%,#f8f8f8 100%);box-shadow: inset 0 0 0 1px #fff;"></div>
<div class="t" style="left:519.3px;top:282.81px;font-size:10.5px;line-height:10.5px;color:#000;">Schnelles Scannen</div>
<div class="a" style="left:503px;top:299px;width:13px;height:13px;box-sizing:border-box;border:1px solid #8f8f8f;background:linear-gradient(135deg,#d4d4d4 0%,#eeeeee 60%,#f8f8f8 100%);box-shadow: inset 0 0 0 1px #fff;"></div>
<svg class="a" style="left:503px;top:299px" width="13" height="13"><path d="M3 6.5 L5.2 9.5 L10 2.8" stroke="#3a4e8e" stroke-width="1.8" fill="none"/></svg>
<div class="t" style="left:519.3px;top:300.81px;font-size:10.5px;line-height:10.5px;color:#000;">C1/PIE anzeigen</div>
<div class="a" style="left:503px;top:315px;width:13px;height:13px;box-sizing:border-box;border:1px solid #8f8f8f;background:linear-gradient(135deg,#d4d4d4 0%,#eeeeee 60%,#f8f8f8 100%);box-shadow: inset 0 0 0 1px #fff;"></div>
<svg class="a" style="left:503px;top:315px" width="13" height="13"><path d="M3 6.5 L5.2 9.5 L10 2.8" stroke="#3a4e8e" stroke-width="1.8" fill="none"/></svg>
<div class="t" style="left:519.3px;top:316.81px;font-size:10.5px;line-height:10.5px;color:#000;">C2/PIF anzeigen</div>
<div class="a" style="left:503px;top:331px;width:13px;height:13px;box-sizing:border-box;border:1px solid #8f8f8f;background:linear-gradient(135deg,#d4d4d4 0%,#eeeeee 60%,#f8f8f8 100%);box-shadow: inset 0 0 0 1px #fff;"></div>
<svg class="a" style="left:503px;top:331px" width="13" height="13"><path d="M3 6.5 L5.2 9.5 L10 2.8" stroke="#3a4e8e" stroke-width="1.8" fill="none"/></svg>
<div class="t" style="left:519.3px;top:332.81px;font-size:10.5px;line-height:10.5px;color:#000;">Jitter anzeigen</div>
<div class="a" style="left:503px;top:346px;width:13px;height:13px;box-sizing:border-box;border:1px solid #8f8f8f;background:linear-gradient(135deg,#d4d4d4 0%,#eeeeee 60%,#f8f8f8 100%);box-shadow: inset 0 0 0 1px #fff;"></div>
<svg class="a" style="left:503px;top:346px" width="13" height="13"><path d="M3 6.5 L5.2 9.5 L10 2.8" stroke="#3a4e8e" stroke-width="1.8" fill="none"/></svg>
<div class="t" style="left:519.3px;top:347.81px;font-size:10.5px;line-height:10.5px;color:#000;">Zeige Lesegeschw.</div>
<div class="a" style="left:503px;top:362px;width:13px;height:13px;box-sizing:border-box;border:1px solid #c5c5c5;background:linear-gradient(135deg,#f4f4f4,#f4f4f4);box-shadow: inset 0 0 0 1px #fff;"></div>
<svg class="a" style="left:503px;top:362px" width="13" height="13"><path d="M3 6.5 L5.2 9.5 L10 2.8" stroke="#b8b8b8" stroke-width="1.8" fill="none"/></svg>
<div class="t" style="left:519.3px;top:363.81px;font-size:10.5px;line-height:10.5px;color:#8d8d8d;">Zeige Schreibgeschw.</div>
<div class="a" style="left:529px;top:380px;width:96px;height:20px;box-sizing:border-box;border:1px solid #707070;border-radius:3px;background:linear-gradient(#f2f2f2 0%,#ebebeb 48%,#dddddd 52%,#cfcfcf 100%);box-shadow: inset 0 0 0 1px rgba(255,255,255,0.85);"></div>
<div class="t" style="left:376.5px;width:400px;text-align:center;top:384.61px;font-size:10.5px;line-height:10.5px;color:#000;">Erweitert</div>
<div class="a" style="left:492px;top:410px;width:140px;height:26px;box-sizing:border-box;border:1px solid #d5dfe5;border-radius:3px;box-shadow: inset 0 0 0 1px #fff;"></div>
<div class="t" style="left:502.7px;top:418.61px;font-size:10.5px;line-height:10.5px;color:#000;">Qualitätsindex:</div>
<div class="t" style="left:220.79999999999995px;width:400px;text-align:right;top:418.61px;font-size:10.5px;line-height:10.5px;color:#1d1d6b;">43</div>
<div class="a" style="left:492px;top:442px;width:140px;height:56px;box-sizing:border-box;border:1px solid #d5dfe5;border-radius:3px;box-shadow: inset 0 0 0 1px #fff;"></div>
<div class="t" style="left:502.7px;top:452.51px;font-size:10.5px;line-height:10.5px;color:#000;">Fortschritt:</div>
<div class="t" style="left:221.39999999999998px;width:400px;text-align:right;top:452.51px;font-size:10.5px;line-height:10.5px;color:#1d1d6b;">100 %</div>
<div class="t" style="left:502.7px;top:468.31px;font-size:10.5px;line-height:10.5px;color:#000;">Position:</div>
<div class="t" style="left:221.39999999999998px;width:400px;text-align:right;top:468.31px;font-size:10.5px;line-height:10.5px;color:#1d1d6b;">4355 MB</div>
<div class="t" style="left:502.7px;top:483.71px;font-size:10.5px;line-height:10.5px;color:#000;">Geschwindigkeit:</div>
<div class="t" style="left:221.39999999999998px;width:400px;text-align:right;top:483.71px;font-size:10.5px;line-height:10.5px;color:#1d1d6b;">4.14 X</div>
<div class="a" style="left:15px;top:442px;width:146px;height:57px;box-sizing:border-box;border:1px solid #a0a0a0;"></div>
<div class="a" style="left:25px;top:436px;width:53px;height:12px;background:#fff;"></div>
<div class="a" style="left:25px;top:439px;width:8px;height:8px;box-sizing:border-box;border:1px solid #000;background:#00ffff;"></div>
<div class="t" style="left:36.5px;top:437.71px;font-size:10.5px;line-height:10.5px;color:#000;">PI Errors</div>
<div class="t" style="left:23.5px;top:453.71px;font-size:10.5px;line-height:10.5px;color:#000;">Durchschnitt</div>
<div class="t" style="left:-249.2px;width:400px;text-align:right;top:453.71px;font-size:10.5px;line-height:10.5px;color:#1d1d6b;">65.93</div>
<div class="t" style="left:23.5px;top:468.71px;font-size:10.5px;line-height:10.5px;color:#000;">Maximum:</div>
<div class="t" style="left:-249.2px;width:400px;text-align:right;top:468.71px;font-size:10.5px;line-height:10.5px;color:#1d1d6b;">347</div>
<div class="t" style="left:23.5px;top:483.71px;font-size:10.5px;line-height:10.5px;color:#000;">Gesamt:</div>
<div class="t" style="left:-249.2px;width:400px;text-align:right;top:483.71px;font-size:10.5px;line-height:10.5px;color:#1d1d6b;">1148439</div>
<div class="a" style="left:173px;top:442px;width:146px;height:57px;box-sizing:border-box;border:1px solid #a0a0a0;"></div>
<div class="a" style="left:183px;top:436px;width:62px;height:12px;background:#fff;"></div>
<div class="a" style="left:183px;top:439px;width:8px;height:8px;box-sizing:border-box;border:1px solid #000;background:#ffff00;"></div>
<div class="t" style="left:194px;top:437.71px;font-size:10.5px;line-height:10.5px;color:#000;">PI Failures</div>
<div class="t" style="left:181.5px;top:453.71px;font-size:10.5px;line-height:10.5px;color:#000;">Durchschnitt</div>
<div class="t" style="left:-90.19999999999999px;width:400px;text-align:right;top:453.71px;font-size:10.5px;line-height:10.5px;color:#1d1d6b;">0.27</div>
<div class="t" style="left:181.5px;top:468.71px;font-size:10.5px;line-height:10.5px;color:#000;">Maximum:</div>
<div class="t" style="left:-90.19999999999999px;width:400px;text-align:right;top:468.71px;font-size:10.5px;line-height:10.5px;color:#1d1d6b;">13</div>
<div class="t" style="left:181.5px;top:483.71px;font-size:10.5px;line-height:10.5px;color:#000;">Gesamt:</div>
<div class="t" style="left:-90.19999999999999px;width:400px;text-align:right;top:483.71px;font-size:10.5px;line-height:10.5px;color:#1d1d6b;">38271</div>
<div class="a" style="left:332px;top:442px;width:147px;height:43px;box-sizing:border-box;border:1px solid #a0a0a0;"></div>
<div class="a" style="left:342px;top:436px;width:11px;height:12px;background:#fff;"></div>
<div class="a" style="left:342px;top:439px;width:8px;height:8px;box-sizing:border-box;border:1px solid #000;background:#ff00ff;"></div>
<div class="t" style="left:352px;top:437.71px;font-size:10.5px;line-height:10.5px;color:#000;">Jitter</div>
<div class="t" style="left:341px;top:453.71px;font-size:10.5px;line-height:10.5px;color:#000;">Durchschnitt</div>
<div class="t" style="left:69px;width:400px;text-align:right;top:453.71px;font-size:10.5px;line-height:10.5px;color:#1d1d6b;">-</div>
<div class="t" style="left:341px;top:468.71px;font-size:10.5px;line-height:10.5px;color:#000;">Maximum:</div>
<div class="t" style="left:69px;width:400px;text-align:right;top:468.71px;font-size:10.5px;line-height:10.5px;color:#1d1d6b;">-</div>
<div class="t" style="left:341px;top:487.71px;font-size:10.5px;line-height:10.5px;color:#000;">PO Ausfälle:</div>
<div class="t" style="left:69px;width:400px;text-align:right;top:487.71px;font-size:10.5px;line-height:10.5px;color:#1d1d6b;">-</div>
</body></html>
